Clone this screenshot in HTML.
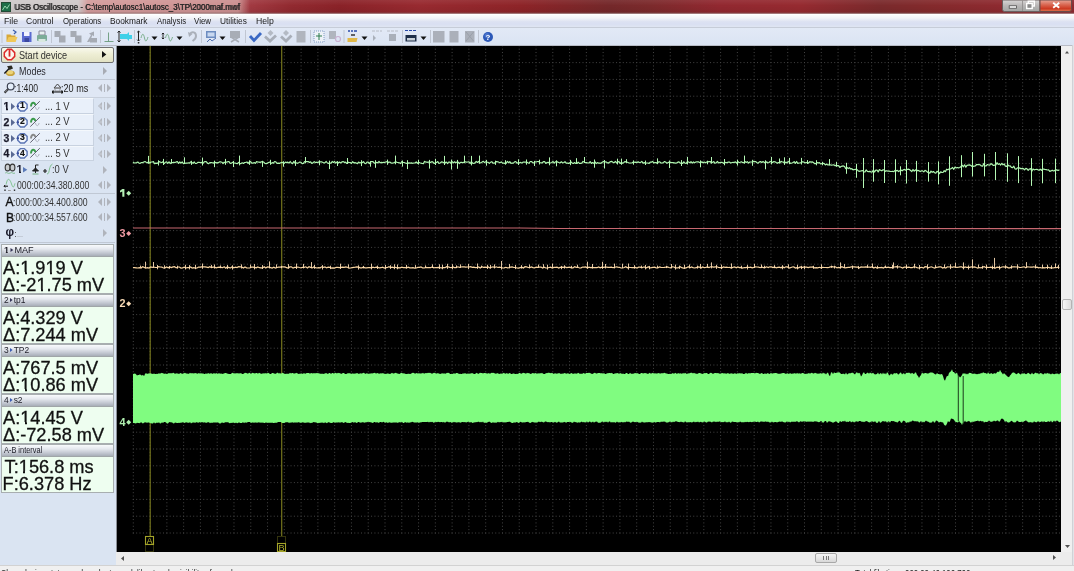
<!DOCTYPE html>
<html><head><meta charset="utf-8">
<style>
*{margin:0;padding:0;box-sizing:border-box}
html,body{width:1074px;height:571px;overflow:hidden;background:#dae4f2;font-family:"Liberation Sans",sans-serif}
body{filter:blur(0.3px)}
.a{position:absolute}
.t{position:absolute;white-space:nowrap;line-height:1}
#title{left:0;top:0;width:1074px;height:14px;background:linear-gradient(rgba(255,255,255,0.07),rgba(255,255,255,0) 40%,rgba(0,0,0,0.06) 85%,rgba(120,90,90,0.5) 93%,rgba(200,190,190,0.9)),linear-gradient(90deg,#cdc9c9 0,#d0caca 78px,#d49c9c 88px,#cc9090 238px,#a23a42 250px,#922a30 290px,#8a2228 340px,#982a30 420px,#8e2428 520px,#74282a 610px,#7c2a2c 650px,#922830 720px,#962a30 800px,#7a2a2c 880px,#842a2c 930px,#8e2a30 1000px)}
#menu{left:0;top:14px;width:1074px;height:13px;background:linear-gradient(#fbfcfc 0,#f2f4f8 25%,#dde2f2 55%,#d9dff2 75%,#dfe5f2 100%);border-top:1px solid #fff}
#tool{left:0;top:27px;width:1074px;height:18px;background:linear-gradient(#e2e9f6,#dbe4f3);border-top:1px solid #c6ccd8}
#panel{left:0;top:45px;width:116px;height:520px;background:#dae4f2}
#scope{left:116px;top:46px;width:945px;height:506px;background:#000;overflow:hidden}
#vscroll{left:1061px;top:46px;width:11px;height:506px;background:#f0f0f0}
#hscroll{left:116px;top:552px;width:945px;height:13px;background:#ececec}
#corner{left:1061px;top:552px;width:13px;height:13px;background:#ececec}
#rborder{left:1072px;top:45px;width:2px;height:520px;background:#e2e4e8;border-left:1px solid #d0d2d6}
#status{left:0;top:565px;width:1074px;height:6px;background:#f0f0f0;border-top:1px solid #d2d2d2;overflow:hidden}
.menu{font-size:9.2px;color:#1a1a1a;top:16.5px;transform-origin:0 0}
.sep{position:absolute;top:30px;width:1px;height:13px;background:#c2c8d4;border-right:1px solid #fafcff}
.row{position:absolute;left:0;width:116px}
.small{font-size:9.3px;color:#333}
.gar{position:absolute;color:#a8acb4;font-size:8px}
.chbox{position:absolute;left:1px;width:93px;height:16px;background:#e9f0fa;border:1px solid #c8d2e0;border-top-color:#f4f8fc}
.pnl{position:absolute;left:1px;width:113px;height:50px;border:1px solid #a8aeb0;background:#eefef0}
.pnl .hd{position:absolute;left:0;top:0;width:111px;height:11.5px;background:linear-gradient(#f8fafc 0,#e6e9ef 35%,#c0c5cf 75%,#a8aeb8 100%);border-bottom:1px solid #a0a6a8}
.pnl .hd>span{position:absolute;left:1.8px;top:0.2px;font-size:9.8px;color:#1e1e28;line-height:1;white-space:nowrap;transform:scaleX(0.86);transform-origin:0 0}
.pnl .l1,.pnl .l2{position:absolute;left:1px;font-size:18.2px;color:#111;line-height:1;white-space:nowrap;-webkit-text-stroke:0.3px #111}
.pnl .l1{top:13.5px}
.pnl .l2{top:30.5px}
.one{position:relative}.one::before,.one::after{content:"";position:absolute;top:0.78em;height:0.17em;background:#eefef0}.one::before{left:0.0em;width:0.238em}.one::after{left:0.352em;width:0.2em}.b2::before,.b2::after{background:#e9f0fa}.b2::before{left:-0.05em;width:0.262em;top:0.72em;height:0.32em}.b2::after{left:0.392em;width:0.22em;top:0.72em;height:0.32em}.b3::before,.b3::after{background:#dae4f2;top:0.74em;height:0.2em}.b3::before{left:0;width:0.228em}.b3::after{left:0.375em;width:0.2em}.b4::before,.b4::after{background:#f2f6fc}.b5::before,.b5::after{background:#d4d7df;top:0.74em;height:0.2em}.b5::before{left:0;width:0.228em}.b5::after{left:0.375em;width:0.2em}
</style></head><body>
<div id="title" class="a">
  <div class="a" style="left:1px;top:2px;width:10px;height:10px;background:#1e6e48;border:1px solid #244a34"></div>
  <svg class="a" style="left:2px;top:3px" width="8" height="8"><path d="M0.5 7L3 3L5 5.5L7.5 1.5" stroke="#9ad8b0" stroke-width="1" fill="none"/></svg>
  <div class="t" style="left:14.5px;top:2.5px;font-size:9px;color:#1a1a1a;transform:scaleX(0.88);transform-origin:0 0">USB Oscilloscope - C:\temp\autosc1\autosc_3\TP\2000maf.mwf</div>
  <svg class="a" style="left:1002px;top:0" width="72" height="14">
    <defs>
      <linearGradient id="wbg" x1="0" y1="0" x2="0" y2="1"><stop offset="0" stop-color="#d8d6d6"/><stop offset="0.5" stop-color="#b8b6b6"/><stop offset="1" stop-color="#a2a6a4"/></linearGradient>
      <linearGradient id="wcl" x1="0" y1="0" x2="0" y2="1"><stop offset="0" stop-color="#e6a496"/><stop offset="0.45" stop-color="#d8624c"/><stop offset="0.75" stop-color="#cc3a22"/><stop offset="1" stop-color="#e07850"/></linearGradient>
    </defs>
    <path d="M0.5 0V9.5Q0.5 11.5 2.5 11.5H38V0Z" fill="url(#wbg)" stroke="#6a6060" stroke-width="1"/>
    <path d="M38 0V11.5H67Q69.5 11.5 69.5 9.5V0Z" fill="url(#wcl)" stroke="#6a4a48" stroke-width="1"/>
    <rect x="20" y="0.5" width="0.8" height="10.5" fill="#8c8a8a"/>
    <rect x="7.2" y="5.8" width="7.2" height="2.4" fill="#fff" stroke="#4a4a4a" stroke-width="0.8"/>
    <rect x="26.3" y="1.2" width="6" height="4.8" fill="none" stroke="#fff" stroke-width="1.4"/>
    <rect x="24.7" y="3.5" width="5.5" height="5" fill="#8a8a8a" stroke="#fff" stroke-width="1.4"/>
    <path d="M51.2 2.8L57.2 7.8M57.2 2.8L51.2 7.8" stroke="#fff" stroke-width="1.9"/>
  </svg>
</div>
<div id="menu" class="a"></div>
<div id="tool" class="a"></div>
<svg class="a" style="left:0;top:27px" width="500" height="18">
<g fill="#c0c6d2">
<rect x="51" y="3" width="1" height="13"/><rect x="100" y="3" width="1" height="13"/><rect x="134" y="3" width="1" height="13"/>
<rect x="201" y="3" width="1" height="13"/><rect x="245" y="3" width="1" height="13"/><rect x="310" y="3" width="1" height="13"/>
<rect x="343.5" y="3" width="1" height="13"/><rect x="402" y="3" width="1" height="13"/><rect x="430" y="3" width="1" height="13"/><rect x="478" y="3" width="1" height="13"/>
<rect x="1.5" y="3" width="1" height="13"/>
</g>
<!-- open folder -->
<path d="M6.5 7.5h4l1 1h4v6h-9z" fill="#d8a838"/><path d="M6.5 15l2-5h9l-2 5z" fill="#f0c858"/><path d="M13 3l3 2l-2 2" stroke="#3a5ca8" stroke-width="1.2" fill="none"/>
<!-- save -->
<rect x="22" y="5" width="9.5" height="10" fill="#5a6ad0"/><rect x="24" y="5" width="5.5" height="4" fill="#f0f2ff"/><rect x="24.5" y="11" width="4.5" height="4" fill="#3a48a0"/>
<!-- print -->
<path d="M39 4h6v4h-6z" fill="#e8f0f0" stroke="#889"/><rect x="37" y="8" width="10" height="6" rx="1" fill="#7cac98"/><rect x="38.5" y="12" width="7" height="3" fill="#d8e8e0"/>
<!-- gray icons -->
<g fill="#a6abb4"><rect x="54.5" y="4" width="6" height="6"/><rect x="59" y="8.5" width="6.5" height="7"/>
<rect x="70.5" y="4" width="6" height="6"/><rect x="75" y="8.5" width="6.5" height="7"/>
<path d="M87 15l4-7l-2-1.5l5-2v5l-1.5-1.5l-3 7z"/><rect x="90" y="11" width="7" height="4.5"/></g>
<!-- green bottom icon -->
<path d="M104.5 14.5h9M108.5 14.5v-9" stroke="#6a9a7a" stroke-width="0.9" fill="none"/>
<!-- cyan icon -->
<path d="M120 7h7l2-2v3h3v4h-3v2l-2-2h-7z" fill="#40d0e8"/><path d="M119 4v11M117.6 5.6l1.4-1.6l1.4 1.6M117.6 13.4l1.4 1.6l1.4-1.6" stroke="#222" stroke-width="1" fill="none"/>
<!-- wave icons -->
<path d="M138.5 4v10M137.2 5.3l1.3-1.3l1.3 1.3M137.2 12.7l1.3 1.3l1.3-1.3" stroke="#222" stroke-width="1" fill="none"/><rect x="137.8" y="15" width="1.5" height="1.5" fill="#222"/>
<path d="M141 11c1.2-5 2.5-5 3.5 0s2.3 3 3.5-1" stroke="#70a880" stroke-width="0.9" fill="none"/>
<path d="M151.5 9.5h6l-3 3.5z" fill="#111"/>
<path d="M163 6v6M161.8 7.2l1.2-1.2l1.2 1.2M161.8 10.8l1.2 1.2l1.2-1.2" stroke="#222" stroke-width="1" fill="none"/>
<path d="M165.5 11c1.2-5 2.5-5 3.5 0s2.3 3 3.5-1" stroke="#70a880" stroke-width="0.9" fill="none"/>
<path d="M176.5 9.5h6l-3 3.5z" fill="#111"/>
<path d="M190 7c2-3 6-2 6 2c0 3-2 4-3.5 5" stroke="#aab0ba" stroke-width="2" fill="none"/><path d="M188 5l1 5l3.5-3z" fill="#aab0ba"/>
<!-- monitor -->
<rect x="206" y="4" width="10" height="7" fill="#6c8cc0"/><rect x="207.5" y="5.5" width="7" height="4" fill="#c8d8f0"/><path d="M207 15l3-3l2 2l4-3" stroke="#5070b0" stroke-width="1" fill="none"/>
<path d="M219.5 9.5h6l-3 3.5z" fill="#111"/>
<rect x="230" y="4" width="10" height="7" fill="#a8adb6"/><path d="M231 15l8-5M231 10l8 5" stroke="#a8adb6" stroke-width="1.5"/>
<!-- checks -->
<path d="M250 9l4 4.5l7-7.5" stroke="#3a68c4" stroke-width="2.8" fill="none"/>
<path d="M265 9.5l5 4.5l6-5.5" stroke="#a8aeb8" stroke-width="2.8" fill="none"/><path d="M270.5 3l3 3l-3 3l-3-3z" fill="#b4bac4"/>
<path d="M281 9.5l5 4.5l5.5-5.5" stroke="#a8aeb8" stroke-width="2.8" fill="none"/><path d="M286 3l3 3l-3 3l-3-3z" fill="#b4bac4"/>
<rect x="296.5" y="4" width="9" height="11.5" fill="#b0b5be"/>
<!-- grid icon -->
<rect x="314" y="4" width="10" height="11" fill="#eef2f8" stroke="#6a8ab8" stroke-width="0.8" stroke-dasharray="1 1"/><path d="M316 9h6M319 6v7" stroke="#2a7a4a" stroke-width="1"/>
<rect x="329" y="4" width="7" height="8" fill="#b0b5be"/><circle cx="338" cy="12" r="2.5" fill="none" stroke="#c8b0d0" stroke-width="1.2"/>
<!-- folder abc -->
<path d="M347.5 11h10l-1 4h-9z" fill="#e0b848"/><path d="M348 4h2M351 4h2M354 4h3" stroke="#2a4aa8" stroke-width="1.4"/><path d="M351 8h4" stroke="#333" stroke-width="1.5"/>
<path d="M361.5 9.5h6l-3 3.5z" fill="#111"/>
<path d="M372 4h3M376 4h3M380 4h2" stroke="#b8bcc6" stroke-width="1"/><path d="M373 8l3 3l-3 3z" fill="#aab0ba"/>
<path d="M387 4h3M391 4h3M395 4h3" stroke="#b8bcc6" stroke-width="1"/><rect x="389" y="7" width="7" height="7" fill="#aab0ba"/>
<!-- abc display -->
<path d="M405 3.5h3M409 3.5h3M413 3.5h3" stroke="#2a4aa8" stroke-width="1.2"/><rect x="405.5" y="8" width="11" height="6.5" fill="#1e2e48"/><rect x="407" y="11" width="8" height="2.5" fill="#c8d0d8"/>
<path d="M420.5 9.5h6l-3 3.5z" fill="#111"/>
<g fill="#abb0ba"><rect x="433" y="4" width="11.5" height="11.5"/><rect x="449.5" y="4" width="9" height="11.5"/><rect x="465" y="4" width="9.5" height="11.5"/></g>
<path d="M466 14l7.5-9M466 5l7.5 9" stroke="#9aa0aa" stroke-width="1"/>
<!-- help -->
<circle cx="488" cy="10" r="5" fill="#2c58b8"/><circle cx="487" cy="8.5" r="2.5" fill="#6a90e0" opacity="0.5"/><text x="485.5" y="13" font-family="Liberation Sans" font-weight="bold" font-size="8" fill="#fff">?</text>
</svg>

<div id="panel" class="a"></div>
<!-- start device -->
<div class="a" style="left:1px;top:47.3px;width:113px;height:15.4px;border:1px solid #707070;border-radius:2px;background:linear-gradient(#f8f8ec,#eeeed4 45%,#e2e2c4)"></div>
<div class="a" style="left:0;top:45px;width:1074px;height:1px;background:#b8bcc6"></div>
<svg class="a" style="left:3px;top:48px" width="14" height="14"><path d="M4.6 1.3h3.8l3.3 3.3v3.8l-3.3 3.3H4.6L1.3 8.4V4.6z" fill="#fbf6ee" stroke="#dc2a2a" stroke-width="1.5"/><rect x="5.6" y="1.6" width="1.8" height="7" fill="#dc2a2a"/></svg>
<svg class="a" style="left:102.4px;top:51.2px" width="5" height="7"><path d="M0 0L4.3 3.4L0 6.8z" fill="#111"/></svg>
<!-- modes -->
<svg class="a" style="left:0;top:62px" width="17" height="16"><ellipse cx="10.4" cy="11.2" rx="4.4" ry="2.8" fill="#c8a440"/><ellipse cx="10" cy="10.4" rx="3.2" ry="1.8" fill="#ecd478"/><path d="M4.4 11.6L9.6 6" stroke="#1a1a1a" stroke-width="1.4"/><path d="M7 4.2l4.6-0.6l1.4 2.8l-3.4 1.6z" fill="#2a2a22"/></svg>
<svg class="a" style="left:103px;top:67px" width="4" height="8"><path d="M0 0L4 4L0 8z" fill="#a8acb4"/></svg>
<div class="a" style="left:0;top:79px;width:115px;height:1px;background:#c0c8d4"></div>
<div class="a" style="left:0;top:80px;width:115px;height:17px;background:#dfe7f4"></div>
<!-- zoom row -->
<svg class="a" style="left:0;top:79px" width="17" height="17"><circle cx="10.7" cy="7.4" r="3.4" fill="#e4eefa" stroke="#3a4050" stroke-width="1.2"/><path d="M8 10.2L4.6 13.8" stroke="#2a2a2a" stroke-width="2"/><path d="M7.6 10.6L5 13.4" stroke="#d0d4dc" stroke-width="0.6"/></svg>
<svg class="a" style="left:52px;top:82px" width="11" height="12"><path d="M2 6l3.5-4l3.5 4z" fill="none" stroke="#444" stroke-width="1"/><rect x="3" y="6" width="5" height="3" fill="none" stroke="#888" stroke-width="0.8"/><path d="M0 10h11M1.5 8.5L0 10l1.5 1.5M9.5 8.5L11 10l-1.5 1.5" stroke="#111" stroke-width="1.1" fill="none"/></svg>
<svg class="a" style="left:98px;top:84px" width="13" height="8"><path d="M4 0L0 4L4 8z" fill="#b0b4bc"/><rect x="6" y="0" width="1" height="8" fill="#b0b4bc"/><path d="M9 0L13 4L9 8z" fill="#b0b4bc"/></svg>
<div class="a" style="left:0;top:97px;width:115px;height:1px;background:#c8d0dc"></div>
<div class="chbox" style="top:98px;height:16px"></div>
<div class="t" style="left:3.4px;top:100.9px;font-size:10.5px;font-weight:bold;color:#1a1a2a;-webkit-text-stroke:0.25px #1a1a2a"><span class="one b2">1</span></div>
<svg class="a" style="left:10.5px;top:103px" width="4" height="7"><path d="M0 0L4 3.5L0 7z" fill="#5a6a94"/></svg>
<svg class="a" style="left:16px;top:99.5px" width="13" height="13"><path d="M4.5 1.6h3.8l2.8 2.8v3.8l-2.8 2.8H4.5L1.7 8.2V4.4z" fill="#f2f6fc" stroke="#5a74b4" stroke-width="1.4"/><circle cx="1.8" cy="6.3" r="1.2" fill="#3a50a0"/></svg>
<div class="t" style="left:19.9px;top:101.3px;font-size:8.6px;font-weight:bold;color:#111;-webkit-text-stroke:0.2px #111">1</div>
<svg class="a" style="left:29px;top:99.5px" width="12" height="12"><path d="M1.3 10.6L10.8 1.2" stroke="#505060" stroke-width="0.9"/><path d="M2 6.5C2.2 1.8 5.8 1.8 6.3 5" stroke="#3a9a4a" stroke-width="1.9" fill="none"/><path d="M6.5 7c0.5 3.5 3 3.5 3.6 0" stroke="#a0a4b0" stroke-width="0.8" fill="none"/></svg>
<svg class="a" style="left:98px;top:102px" width="13" height="8"><path d="M4 0L0 4L4 8z" fill="#b0b4bc"/><path d="M1 3.2h3M1 4.8h3" stroke="#d8dde6" stroke-width="0.6"/><rect x="6" y="0" width="1" height="8" fill="#b0b4bc"/><path d="M9 0L13 4L9 8z" fill="#b0b4bc"/></svg>
<div class="chbox" style="top:114px;height:16px"></div>
<div class="t" style="left:3.4px;top:116.9px;font-size:10.5px;font-weight:bold;color:#1a1a2a;-webkit-text-stroke:0.25px #1a1a2a">2</div>
<svg class="a" style="left:10.5px;top:119px" width="4" height="7"><path d="M0 0L4 3.5L0 7z" fill="#5a6a94"/></svg>
<svg class="a" style="left:16px;top:115.5px" width="13" height="13"><path d="M4.5 1.6h3.8l2.8 2.8v3.8l-2.8 2.8H4.5L1.7 8.2V4.4z" fill="#f2f6fc" stroke="#5a74b4" stroke-width="1.4"/><circle cx="1.8" cy="6.3" r="1.2" fill="#3a50a0"/></svg>
<div class="t" style="left:19.9px;top:117.3px;font-size:8.6px;font-weight:bold;color:#111;-webkit-text-stroke:0.2px #111">2</div>
<svg class="a" style="left:29px;top:115.5px" width="12" height="12"><path d="M1.3 10.6L10.8 1.2" stroke="#505060" stroke-width="0.9"/><path d="M2 6.5C2.2 1.8 5.8 1.8 6.3 5" stroke="#3a9a4a" stroke-width="1.9" fill="none"/><path d="M6.5 7c0.5 3.5 3 3.5 3.6 0" stroke="#a0a4b0" stroke-width="0.8" fill="none"/></svg>
<svg class="a" style="left:98px;top:118px" width="13" height="8"><path d="M4 0L0 4L4 8z" fill="#b0b4bc"/><path d="M1 3.2h3M1 4.8h3" stroke="#d8dde6" stroke-width="0.6"/><rect x="6" y="0" width="1" height="8" fill="#b0b4bc"/><path d="M9 0L13 4L9 8z" fill="#b0b4bc"/></svg>
<div class="chbox" style="top:130px;height:16px"></div>
<div class="t" style="left:3.4px;top:132.9px;font-size:10.5px;font-weight:bold;color:#1a1a2a;-webkit-text-stroke:0.25px #1a1a2a">3</div>
<svg class="a" style="left:10.5px;top:135px" width="4" height="7"><path d="M0 0L4 3.5L0 7z" fill="#5a6a94"/></svg>
<svg class="a" style="left:16px;top:131.5px" width="13" height="13"><path d="M4.5 1.6h3.8l2.8 2.8v3.8l-2.8 2.8H4.5L1.7 8.2V4.4z" fill="#f2f6fc" stroke="#5a74b4" stroke-width="1.4"/><circle cx="1.8" cy="6.3" r="1.2" fill="#3a50a0"/></svg>
<div class="t" style="left:19.9px;top:133.3px;font-size:8.6px;font-weight:bold;color:#111;-webkit-text-stroke:0.2px #111">3</div>
<svg class="a" style="left:29px;top:131.5px" width="12" height="12"><path d="M1.3 10.6L10.8 1.2" stroke="#505060" stroke-width="0.9"/><path d="M2 6.5C2.2 1.8 5.8 1.8 6.3 5" stroke="#888" stroke-width="1.9" fill="none"/><path d="M6.5 7c0.5 3.5 3 3.5 3.6 0" stroke="#a0a4b0" stroke-width="0.8" fill="none"/></svg>
<svg class="a" style="left:98px;top:134px" width="13" height="8"><path d="M4 0L0 4L4 8z" fill="#b0b4bc"/><path d="M1 3.2h3M1 4.8h3" stroke="#d8dde6" stroke-width="0.6"/><rect x="6" y="0" width="1" height="8" fill="#b0b4bc"/><path d="M9 0L13 4L9 8z" fill="#b0b4bc"/></svg>
<div class="chbox" style="top:145.5px;height:15.5px"></div>
<div class="t" style="left:3.4px;top:148.4px;font-size:10.5px;font-weight:bold;color:#1a1a2a;-webkit-text-stroke:0.25px #1a1a2a">4</div>
<svg class="a" style="left:10.5px;top:150.5px" width="4" height="7"><path d="M0 0L4 3.5L0 7z" fill="#5a6a94"/></svg>
<svg class="a" style="left:16px;top:147.0px" width="13" height="13"><path d="M4.5 1.6h3.8l2.8 2.8v3.8l-2.8 2.8H4.5L1.7 8.2V4.4z" fill="#f2f6fc" stroke="#5a74b4" stroke-width="1.4"/><circle cx="1.8" cy="6.3" r="1.2" fill="#3a50a0"/></svg>
<div class="t" style="left:19.9px;top:148.8px;font-size:8.6px;font-weight:bold;color:#111;-webkit-text-stroke:0.2px #111">4</div>
<svg class="a" style="left:29px;top:147.0px" width="12" height="12"><path d="M1.3 10.6L10.8 1.2" stroke="#505060" stroke-width="0.9"/><path d="M2 6.5C2.2 1.8 5.8 1.8 6.3 5" stroke="#3a9a4a" stroke-width="1.9" fill="none"/><path d="M6.5 7c0.5 3.5 3 3.5 3.6 0" stroke="#a0a4b0" stroke-width="0.8" fill="none"/></svg>
<svg class="a" style="left:98px;top:149.5px" width="13" height="8"><path d="M4 0L0 4L4 8z" fill="#b0b4bc"/><path d="M1 3.2h3M1 4.8h3" stroke="#d8dde6" stroke-width="0.6"/><rect x="6" y="0" width="1" height="8" fill="#b0b4bc"/><path d="M9 0L13 4L9 8z" fill="#b0b4bc"/></svg>
<!-- trigger rows -->
<svg class="a" style="left:0;top:160px" width="17" height="17"><ellipse cx="7.6" cy="7.5" rx="2.4" ry="3.4" fill="#c8ccd0" stroke="#333" stroke-width="1.1"/><ellipse cx="12.5" cy="7.5" rx="2.4" ry="3.4" fill="#c8ccd0" stroke="#333" stroke-width="1.1"/><path d="M5.2 13c1.5-1.5 3 1.5 4.9 0s3.2 1.5 4.9 0" stroke="#78b888" stroke-width="0.9" fill="none"/></svg>
<div class="t" style="left:16.6px;top:164.3px;font-size:11px;font-weight:bold;color:#1a1a2a"><span class="one b3">1</span></div>
<svg class="a" style="left:23px;top:166.6px" width="5" height="6"><path d="M0 0L4.3 2.7L0 5.4z" fill="#5a7ab8"/></svg>
<svg class="a" style="left:32px;top:164px" width="8" height="11"><path d="M3.5 1h3M3.5 1v8M0.5 7h6l-3-3z" stroke="#222" stroke-width="1" fill="#222"/><path d="M0.5 10h6" stroke="#70b080"/></svg>
<svg class="a" style="left:43px;top:163px" width="11" height="12"><path d="M0 8h4M2 6v4" stroke="#222" stroke-width="1.2"/><path d="M4 11c2 0 2-3 2.5-5s1-4 3-5" stroke="#80c090" stroke-width="1" fill="none"/></svg>
<svg class="a" style="left:103px;top:166px" width="4" height="8"><path d="M0 0L4 4L0 8z" fill="#b0b4bc"/></svg>
<svg class="a" style="left:0;top:176px" width="17" height="16"><path d="M6.1 8.5C7.5 2 8.5 3 9.8 4.2S12 11 13.2 11S14.6 8 15 7.3" stroke="#78c088" stroke-width="0.9" fill="none"/><path d="M4 10.2h4M5.2 9l-1.2 1.2l1.2 1.2" stroke="#111" stroke-width="1" fill="none"/><rect x="4.3" y="13.5" width="1.4" height="1.4" fill="#222"/><rect x="8" y="14" width="2.8" height="0.8" fill="#888"/><rect x="13.8" y="13.5" width="1.4" height="1.4" fill="#222"/></svg>
<svg class="a" style="left:98px;top:181px" width="13" height="8"><path d="M4 0L0 4L4 8z" fill="#b0b4bc"/><rect x="6" y="0" width="1" height="8" fill="#b0b4bc"/><path d="M9 0L13 4L9 8z" fill="#b0b4bc"/></svg>
<div class="a" style="left:0;top:193px;width:115px;height:1px;background:#c0c8d4"></div>
<div class="t" style="left:5.4px;top:196.4px;font-size:12px;color:#111;-webkit-text-stroke:0.35px #111">A</div>
<svg class="a" style="left:98px;top:198px" width="13" height="8"><path d="M4 0L0 4L4 8z" fill="#b0b4bc"/><rect x="6" y="0" width="1" height="8" fill="#b0b4bc"/><path d="M9 0L13 4L9 8z" fill="#b0b4bc"/></svg>
<div class="t" style="left:6px;top:211.6px;font-size:12px;color:#111;-webkit-text-stroke:0.35px #111">B</div>
<svg class="a" style="left:98px;top:213px" width="13" height="8"><path d="M4 0L0 4L4 8z" fill="#b0b4bc"/><rect x="6" y="0" width="1" height="8" fill="#b0b4bc"/><path d="M9 0L13 4L9 8z" fill="#b0b4bc"/></svg>
<div class="t" style="left:5.5px;top:226px;font-size:12px;color:#1a1a2a;font-weight:bold">φ</div>
<div class="t" style="left:14.3px;top:229.5px;font-size:9px;color:#444">:</div><div class="t" style="left:16.6px;top:229.5px;font-size:9px;color:#a0a4aa;transform:scaleX(0.8);transform-origin:0 0">...</div>
<svg class="a" style="left:103px;top:229px" width="4" height="8"><path d="M0 0L4 4L0 8z" fill="#b0b4bc"/></svg>
<div class="a" style="left:0;top:242px;width:115px;height:1px;background:#c0c8d4"></div>
<!-- panels -->
<div class="pnl" style="top:244px"><div class="hd"><span style="transform:scaleX(0.93)"><span class="one b5" style="font-weight:bold">1</span><i style="display:inline-block;width:0;height:0;border-left:3.8px solid #335;border-top:2.6px solid transparent;border-bottom:2.6px solid transparent;margin:0 1.4px 1.2px 1.4px"></i>MAF</span></div><div class="l1">A:<span class="one">1</span>.9<span class="one">1</span>9 V</div><div class="l2">Δ:-2<span class="one">1</span>.75 mV</div></div>
<div class="pnl" style="top:294px"><div class="hd"><span>2<i style="display:inline-block;width:0;height:0;border-left:3.8px solid #335;border-top:2.6px solid transparent;border-bottom:2.6px solid transparent;margin:0 1.4px 1.2px 1.4px"></i>tp1</span></div><div class="l1">A:4.329 V</div><div class="l2">Δ:7.244 mV</div></div>
<div class="pnl" style="top:344px"><div class="hd"><span>3<i style="display:inline-block;width:0;height:0;border-left:3.8px solid #3a5ab0;border-top:2.6px solid transparent;border-bottom:2.6px solid transparent;margin:0 1.4px 1.2px 1.4px"></i>TP2</span></div><div class="l1">A:767.5 mV</div><div class="l2">Δ:<span class="one">1</span>0.86 mV</div></div>
<div class="pnl" style="top:394px"><div class="hd"><span>4<i style="display:inline-block;width:0;height:0;border-left:3.8px solid #3a5ab0;border-top:2.6px solid transparent;border-bottom:2.6px solid transparent;margin:0 1.4px 1.2px 1.4px"></i>s2</span></div><div class="l1">A:<span class="one">1</span>4.45 V</div><div class="l2">Δ:-72.58 mV</div></div>
<div class="pnl" style="top:444px;height:49px"><div class="hd"><span style="font-size:8.6px;top:1px;left:1.5px">A-B interval</span></div><div class="l1" style="left:2.6px;top:12.8px">T:<span class="one">1</span>56.8 ms</div><div class="l2" style="left:0.6px;top:29.8px">F:6.378 Hz</div></div>

<div id="scope" class="a"><svg width="945" height="506" viewBox="0 0 945 506" style="position:absolute;left:0;top:0">
<rect x="0" y="0" width="1" height="506" fill="#8a8e96"/>
<path d="M17.30 0V487.60M34.08 0V487.60M50.86 0V487.60M67.64 0V487.60M84.42 0V487.60M101.20 0V487.60M117.98 0V487.60M134.76 0V487.60M151.54 0V487.60M168.32 0V487.60M185.10 0V487.60M201.88 0V487.60M218.66 0V487.60M235.44 0V487.60M252.22 0V487.60M269.00 0V487.60M285.78 0V487.60M302.56 0V487.60M319.34 0V487.60M336.12 0V487.60M352.90 0V487.60M369.68 0V487.60M386.46 0V487.60M403.24 0V487.60M420.02 0V487.60M436.80 0V487.60M453.58 0V487.60M470.36 0V487.60M487.14 0V487.60M503.92 0V487.60M520.70 0V487.60M537.48 0V487.60M554.26 0V487.60M571.04 0V487.60M587.82 0V487.60M604.60 0V487.60M621.38 0V487.60M638.16 0V487.60M654.94 0V487.60M671.72 0V487.60M688.50 0V487.60M705.28 0V487.60M722.06 0V487.60M738.84 0V487.60M755.62 0V487.60M772.40 0V487.60M789.18 0V487.60M805.96 0V487.60M822.74 0V487.60M839.52 0V487.60M856.30 0V487.60M873.08 0V487.60M889.86 0V487.60M906.64 0V487.60M923.42 0V487.60M940.20 0V487.60" stroke="#444" stroke-width="1" stroke-dasharray="1 2.360" stroke-dashoffset="-2.660"/><path d="M16.80 16.60H945M16.80 33.40H945M16.80 50.20H945M16.80 67.00H945M16.80 83.80H945M16.80 100.60H945M16.80 117.40H945M16.80 134.20H945M16.80 151.00H945M16.80 167.80H945M16.80 184.60H945M16.80 201.40H945M16.80 218.20H945M16.80 235.00H945M16.80 251.80H945M16.80 268.60H945M16.80 285.40H945M16.80 302.20H945M16.80 319.00H945M16.80 335.80H945M16.80 352.60H945M16.80 369.40H945M16.80 386.20H945M16.80 403.00H945M16.80 419.80H945M16.80 436.60H945M16.80 453.40H945M16.80 470.20H945M16.80 487.00H945" stroke="#444" stroke-width="1" stroke-dasharray="1 2.356"/>
<path d="M34.19999999999999 0V490M165.7 0V490" stroke="#74741c" stroke-width="1.2"/><rect x="29.5" y="498.5" width="8" height="7" fill="none" stroke="#34340e" stroke-width="1"/><rect x="29.5" y="490.5" width="8" height="8" fill="#000" stroke="#a4a428" stroke-width="1.1"/><text x="30.400000000000006" y="497.70000000000005" fill="#b4b430" font-family="Liberation Sans" font-size="9.2">A</text><rect x="161.5" y="490.5" width="8" height="7" fill="none" stroke="#34340e" stroke-width="1"/><rect x="161.5" y="497.5" width="8" height="8" fill="#000" stroke="#a4a428" stroke-width="1.1"/><text x="162.60000000000002" y="504.79999999999995" fill="#b4b430" font-family="Liberation Sans" font-size="9.2">B</text>
<path d="M17 182.0 L404 182.0 L444 182.5 L945 182.6" stroke="#c86870" stroke-width="1.1" fill="none"/>
<path d="M17.0 221.6 L18.6 221.7 L20.2 221.8 L21.8 222.0 L23.4 221.7 L25.0 222.0 L26.6 220.7 L28.2 221.4 L29.8 222.0 L31.4 221.6 L33.0 222.0 L34.6 220.9 L36.2 221.4 L37.8 221.0 L39.4 221.5 L41.0 221.5 L42.6 220.7 L44.2 221.0 L45.8 221.1 L47.4 222.0 L49.0 221.8 L50.6 220.9 L52.2 221.8 L53.8 220.9 L55.4 221.6 L57.0 220.9 L58.6 220.7 L60.2 221.9 L61.8 221.0 L63.4 221.0 L65.0 222.1 L66.6 221.9 L68.2 221.1 L69.8 222.0 L71.4 221.5 L73.0 221.6 L74.6 221.0 L76.2 222.0 L77.8 221.7 L79.4 222.1 L81.0 222.0 L82.6 221.1 L84.2 221.2 L85.8 220.9 L87.4 220.9 L89.0 220.8 L90.6 221.1 L92.2 221.5 L93.8 220.7 L95.4 221.6 L97.0 221.2 L98.6 221.1 L100.2 221.8 L101.8 221.4 L103.4 221.1 L105.0 221.4 L106.6 221.7 L108.2 220.8 L109.8 222.1 L111.4 220.7 L113.0 221.7 L114.6 221.9 L116.2 220.7 L117.8 221.8 L119.4 221.2 L121.0 221.5 L122.6 220.7 L124.2 220.8 L125.8 221.0 L127.4 222.0 L129.0 221.0 L130.6 221.8 L132.2 222.0 L133.8 222.0 L135.4 221.2 L137.0 221.2 L138.6 221.4 L140.2 221.8 L141.8 220.9 L143.4 221.7 L145.0 221.8 L146.6 221.9 L148.2 220.8 L149.8 222.0 L151.4 220.8 L153.0 221.2 L154.6 221.6 L156.2 222.0 L157.8 221.2 L159.4 222.0 L161.0 221.5 L162.6 221.1 L164.2 221.1 L165.8 220.9 L167.4 220.8 L169.0 220.9 L170.6 221.7 L172.2 222.1 L173.8 220.9 L175.4 220.8 L177.0 222.1 L178.6 221.4 L180.2 221.3 L181.8 221.0 L183.4 221.5 L185.0 221.9 L186.6 221.3 L188.2 221.3 L189.8 220.8 L191.4 222.0 L193.0 220.7 L194.6 221.4 L196.2 221.9 L197.8 220.9 L199.4 221.7 L201.0 222.0 L202.6 221.6 L204.2 221.8 L205.8 220.8 L207.4 221.3 L209.0 220.9 L210.6 221.9 L212.2 221.1 L213.8 221.3 L215.4 222.1 L217.0 221.9 L218.6 222.1 L220.2 221.3 L221.8 221.4 L223.4 221.7 L225.0 221.4 L226.6 221.1 L228.2 221.3 L229.8 220.9 L231.4 221.2 L233.0 222.1 L234.6 222.0 L236.2 221.6 L237.8 221.4 L239.4 221.2 L241.0 220.8 L242.6 221.1 L244.2 221.8 L245.8 221.9 L247.4 221.2 L249.0 221.8 L250.6 221.8 L252.2 221.7 L253.8 221.6 L255.4 221.8 L257.0 221.2 L258.6 221.7 L260.2 221.1 L261.8 221.4 L263.4 221.8 L265.0 221.7 L266.6 221.1 L268.2 222.0 L269.8 221.6 L271.4 221.5 L273.0 220.7 L274.6 221.5 L276.2 221.1 L277.8 221.6 L279.4 221.3 L281.0 221.8 L282.6 221.6 L284.2 221.8 L285.8 221.2 L287.4 221.6 L289.0 221.7 L290.6 221.9 L292.2 221.2 L293.8 221.9 L295.4 221.9 L297.0 221.7 L298.6 222.1 L300.2 222.0 L301.8 221.4 L303.4 221.4 L305.0 220.9 L306.6 221.9 L308.2 222.0 L309.8 221.4 L311.4 221.7 L313.0 221.7 L314.6 221.7 L316.2 220.9 L317.8 221.8 L319.4 221.5 L321.0 221.6 L322.6 221.3 L324.2 221.6 L325.8 221.8 L327.4 221.6 L329.0 221.7 L330.6 220.7 L332.2 220.9 L333.8 221.3 L335.4 221.6 L337.0 221.0 L338.6 221.7 L340.2 221.6 L341.8 220.8 L343.4 221.4 L345.0 221.0 L346.6 220.8 L348.2 220.9 L349.8 221.1 L351.4 221.0 L353.0 221.0 L354.6 220.7 L356.2 221.4 L357.8 221.2 L359.4 221.6 L361.0 221.5 L362.6 221.0 L364.2 222.0 L365.8 220.7 L367.4 221.3 L369.0 221.1 L370.6 221.3 L372.2 220.9 L373.8 221.9 L375.4 221.2 L377.0 220.8 L378.6 221.6 L380.2 220.8 L381.8 221.5 L383.4 221.2 L385.0 221.5 L386.6 222.0 L388.2 221.8 L389.8 221.3 L391.4 221.8 L393.0 221.6 L394.6 221.2 L396.2 220.9 L397.8 221.5 L399.4 221.5 L401.0 222.0 L402.6 222.1 L404.2 221.6 L405.8 221.2 L407.4 222.0 L409.0 220.7 L410.6 220.9 L412.2 221.5 L413.8 221.6 L415.4 220.9 L417.0 221.6 L418.6 221.9 L420.2 221.2 L421.8 221.3 L423.4 221.0 L425.0 221.1 L426.6 222.1 L428.2 221.2 L429.8 222.0 L431.4 222.0 L433.0 221.5 L434.6 221.1 L436.2 222.1 L437.8 221.4 L439.4 221.3 L441.0 221.1 L442.6 222.1 L444.2 221.4 L445.8 221.1 L447.4 221.4 L449.0 220.9 L450.6 221.6 L452.2 221.3 L453.8 221.1 L455.4 221.8 L457.0 221.9 L458.6 220.7 L460.2 221.4 L461.8 221.1 L463.4 222.0 L465.0 221.8 L466.6 221.0 L468.2 221.1 L469.8 220.9 L471.4 222.1 L473.0 221.1 L474.6 221.6 L476.2 221.4 L477.8 221.6 L479.4 221.5 L481.0 221.7 L482.6 220.9 L484.2 221.8 L485.8 221.1 L487.4 221.4 L489.0 221.2 L490.6 221.1 L492.2 221.4 L493.8 221.4 L495.4 221.2 L497.0 221.7 L498.6 221.5 L500.2 220.8 L501.8 221.1 L503.4 221.3 L505.0 222.0 L506.6 221.9 L508.2 221.5 L509.8 220.7 L511.4 221.8 L513.0 221.3 L514.6 221.5 L516.2 221.7 L517.8 221.6 L519.4 221.4 L521.0 222.0 L522.6 221.2 L524.2 221.2 L525.8 221.9 L527.4 221.0 L529.0 221.1 L530.6 221.9 L532.2 220.8 L533.8 221.9 L535.4 221.7 L537.0 221.3 L538.6 221.1 L540.2 221.8 L541.8 222.0 L543.4 220.9 L545.0 221.4 L546.6 221.5 L548.2 221.4 L549.8 221.2 L551.4 220.9 L553.0 221.5 L554.6 221.8 L556.2 220.8 L557.8 221.0 L559.4 221.8 L561.0 221.8 L562.6 221.6 L564.2 220.7 L565.8 221.7 L567.4 222.1 L569.0 222.1 L570.6 221.7 L572.2 220.8 L573.8 221.9 L575.4 221.0 L577.0 221.6 L578.6 222.0 L580.2 221.7 L581.8 220.9 L583.4 221.1 L585.0 222.0 L586.6 220.9 L588.2 221.6 L589.8 221.3 L591.4 220.9 L593.0 221.6 L594.6 220.8 L596.2 220.9 L597.8 221.2 L599.4 220.8 L601.0 220.8 L602.6 221.5 L604.2 221.7 L605.8 221.9 L607.4 220.9 L609.0 221.3 L610.6 221.1 L612.2 221.5 L613.8 221.4 L615.4 222.0 L617.0 221.2 L618.6 220.8 L620.2 221.7 L621.8 220.9 L623.4 221.6 L625.0 221.4 L626.6 222.0 L628.2 221.5 L629.8 221.6 L631.4 221.1 L633.0 221.5 L634.6 221.1 L636.2 221.8 L637.8 221.4 L639.4 220.9 L641.0 221.0 L642.6 221.2 L644.2 221.7 L645.8 221.0 L647.4 221.7 L649.0 221.6 L650.6 220.8 L652.2 221.6 L653.8 220.8 L655.4 220.9 L657.0 221.5 L658.6 221.0 L660.2 221.9 L661.8 221.4 L663.4 221.2 L665.0 221.8 L666.6 220.7 L668.2 221.7 L669.8 220.8 L671.4 220.9 L673.0 222.0 L674.6 221.7 L676.2 221.0 L677.8 220.9 L679.4 222.1 L681.0 221.6 L682.6 221.8 L684.2 220.9 L685.8 221.6 L687.4 221.2 L689.0 221.0 L690.6 221.2 L692.2 221.6 L693.8 221.2 L695.4 221.2 L697.0 220.9 L698.6 221.9 L700.2 221.6 L701.8 221.8 L703.4 221.3 L705.0 221.9 L706.6 221.4 L708.2 221.5 L709.8 221.5 L711.4 221.7 L713.0 221.3 L714.6 220.8 L716.2 220.7 L717.8 221.0 L719.4 220.8 L721.0 221.9 L722.6 221.4 L724.2 221.8 L725.8 220.7 L727.4 221.4 L729.0 221.9 L730.6 221.6 L732.2 221.3 L733.8 221.4 L735.4 220.8 L737.0 220.9 L738.6 220.9 L740.2 221.2 L741.8 221.2 L743.4 221.9 L745.0 220.9 L746.6 221.1 L748.2 221.1 L749.8 220.9 L751.4 221.1 L753.0 221.0 L754.6 221.4 L756.2 220.7 L757.8 222.0 L759.4 221.2 L761.0 222.0 L762.6 221.7 L764.2 221.6 L765.8 221.4 L767.4 222.0 L769.0 220.9 L770.6 221.6 L772.2 221.1 L773.8 221.6 L775.4 221.7 L777.0 220.9 L778.6 221.0 L780.2 220.7 L781.8 221.0 L783.4 220.8 L785.0 221.3 L786.6 222.1 L788.2 221.2 L789.8 221.1 L791.4 221.4 L793.0 221.1 L794.6 221.7 L796.2 221.7 L797.8 220.9 L799.4 221.0 L801.0 221.6 L802.6 222.0 L804.2 221.6 L805.8 221.3 L807.4 222.1 L809.0 220.7 L810.6 220.8 L812.2 221.8 L813.8 221.3 L815.4 220.8 L817.0 221.5 L818.6 222.1 L820.2 221.4 L821.8 221.2 L823.4 220.8 L825.0 220.8 L826.6 222.0 L828.2 221.4 L829.8 222.0 L831.4 220.8 L833.0 221.0 L834.6 220.8 L836.2 221.3 L837.8 220.8 L839.4 221.1 L841.0 221.3 L842.6 221.1 L844.2 220.8 L845.8 220.8 L847.4 222.1 L849.0 221.0 L850.6 221.4 L852.2 221.3 L853.8 221.4 L855.4 220.8 L857.0 221.1 L858.6 220.9 L860.2 221.5 L861.8 222.0 L863.4 221.5 L865.0 221.9 L866.6 221.0 L868.2 220.7 L869.8 221.5 L871.4 221.4 L873.0 221.5 L874.6 221.2 L876.2 221.6 L877.8 221.7 L879.4 222.0 L881.0 221.1 L882.6 221.3 L884.2 221.9 L885.8 221.0 L887.4 220.9 L889.0 221.1 L890.6 220.8 L892.2 221.8 L893.8 221.8 L895.4 221.1 L897.0 220.9 L898.6 220.8 L900.2 221.0 L901.8 220.8 L903.4 221.3 L905.0 221.5 L906.6 221.0 L908.2 220.8 L909.8 221.7 L911.4 220.8 L913.0 221.0 L914.6 221.1 L916.2 221.2 L917.8 220.8 L919.4 221.3 L921.0 221.1 L922.6 221.8 L924.2 221.5 L925.8 222.0 L927.4 221.6 L929.0 221.8 L930.6 221.5 L932.2 221.3 L933.8 221.8 L935.4 221.6 L937.0 222.0 L938.6 221.7 L940.2 221.7 L941.8 221.1 L943.4 221.8" fill="none" stroke="#f8d4a0" stroke-width="1.2"/><path d="M24.5 219.6V221.8M29.5 215.7V222.2M37.5 216.0V221.8M41.5 219.0V223.3M48.5 219.3V222.5M53.5 219.9V222.8M61.5 219.7V222.7M69.5 218.8V223.5M73.5 219.1V223.4M79.5 218.8V223.2M86.5 217.5V222.8M95.5 218.9V221.8M98.5 218.5V222.6M104.5 219.4V222.2M111.5 219.0V223.1M116.5 219.3V223.6M125.5 218.4V222.5M134.5 218.7V221.8M138.5 218.1V223.4M146.5 219.1V223.0M153.5 215.4V222.4M160.5 218.4V222.1M165.5 219.8V222.3M172.5 218.1V222.5M180.5 217.6V223.0M187.5 217.9V222.4M195.5 216.1V222.2M198.5 219.0V222.8M206.5 219.1V223.5M214.5 219.7V223.1M224.5 217.7V223.0M232.5 218.4V222.1M242.5 219.3V223.6M247.5 219.9V222.4M255.5 217.7V223.4M261.5 219.6V223.0M269.5 219.0V223.4M274.5 219.2V222.9M278.5 218.3V223.2M281.5 218.5V223.3M290.5 218.9V222.5M299.5 219.1V222.2M309.5 219.4V221.8M316.5 218.4V222.0M323.5 218.3V223.0M326.5 218.7V223.3M331.5 217.8V222.9M336.5 218.2V223.3M340.5 219.4V222.0M344.5 218.4V221.9M352.5 217.9V223.2M361.5 217.5V222.9M365.5 219.6V221.8M371.5 218.8V223.0M374.5 218.9V222.7M378.5 218.4V222.4M385.5 215.0V223.5M393.5 218.1V222.3M399.5 219.0V223.1M405.5 219.2V222.6M413.5 218.5V222.3M422.5 218.6V221.8M427.5 218.2V221.8M431.5 218.7V223.6M436.5 217.6V221.9M445.5 219.9V223.2M448.5 219.3V222.6M455.5 219.8V222.1M461.5 218.7V221.9M471.5 215.7V222.7M476.5 218.0V222.5M486.5 215.8V222.9M489.5 218.0V222.5M498.5 217.6V222.4M506.5 217.7V222.0M512.5 217.5V223.6M518.5 219.2V222.6M525.5 219.6V222.0M529.5 218.9V223.4M533.5 219.9V223.3M541.5 219.6V222.1M550.5 219.8V222.1M555.5 218.0V222.4M559.5 218.6V223.6M563.5 219.6V222.9M568.5 218.7V222.8M573.5 218.5V222.2M581.5 219.6V222.6M584.5 218.0V222.5M591.5 217.9V221.8M595.5 216.4V222.4M600.5 218.8V222.9M605.5 218.6V223.1M615.5 217.4V222.3M625.5 219.7V222.6M631.5 218.9V223.5M638.5 217.8V222.0M645.5 218.5V222.1M648.5 219.7V222.3M658.5 219.2V222.2M666.5 219.2V223.3M672.5 218.3V222.2M681.5 218.8V223.4M685.5 219.8V223.1M688.5 219.8V223.3M697.5 219.8V222.8M705.5 218.4V222.9M715.5 219.6V221.8M718.5 219.7V222.6M728.5 218.1V221.8M736.5 219.6V223.1M742.5 219.9V223.1M751.5 218.7V222.0M756.5 217.5V222.1M761.5 219.7V222.5M769.5 219.5V222.0M776.5 218.8V222.8M781.5 219.2V222.6M790.5 218.5V223.0M798.5 217.8V222.3M803.5 219.0V223.4M811.5 218.3V223.5M819.5 219.1V221.9M828.5 218.4V221.8M834.5 218.3V223.1M839.5 216.6V221.9M847.5 216.4V223.4M852.5 219.4V223.5M862.5 218.6V221.9M866.5 219.8V222.8M870.5 218.6V223.5M876.5 219.6V223.2M883.5 219.7V223.6M889.5 219.2V222.7M895.5 219.4V222.7M901.5 218.3V223.4M910.5 216.1V222.0M919.5 218.7V222.5M926.5 218.6V222.2M931.5 218.7V223.1M935.5 219.4V223.0M939.5 217.4V222.0M942.5 218.8V222.9M856.5 213.4V222.5M878.5 211.9V222.5M724.5 216.4V222.5M777.5 216.4V222.5" stroke="#fcdcb4" stroke-width="0.9"/>
<path d="M17.0 115.9 L18.2 117.0 L19.4 116.9 L20.6 116.6 L21.8 116.0 L23.0 117.2 L24.2 117.3 L25.4 116.6 L26.6 116.6 L27.8 116.0 L29.0 115.5 L30.2 116.3 L31.4 116.8 L32.6 115.6 L33.8 117.2 L35.0 116.0 L36.2 116.0 L37.4 115.6 L38.6 117.7 L39.8 117.1 L41.0 117.4 L42.2 116.8 L43.4 115.6 L44.6 116.2 L45.8 116.6 L47.0 115.7 L48.2 117.6 L49.4 116.3 L50.6 115.8 L51.8 117.3 L53.0 115.8 L54.2 117.5 L55.4 116.5 L56.6 116.7 L57.8 116.2 L59.0 116.6 L60.2 115.9 L61.4 115.6 L62.6 117.4 L63.8 116.0 L65.0 117.2 L66.2 115.9 L67.4 117.6 L68.6 117.5 L69.8 117.1 L71.0 117.2 L72.2 116.8 L73.4 117.1 L74.6 115.8 L75.8 116.5 L77.0 117.3 L78.2 115.9 L79.4 117.5 L80.6 117.4 L81.8 116.4 L83.0 116.3 L84.2 116.5 L85.4 116.3 L86.6 117.7 L87.8 116.3 L89.0 115.5 L90.2 115.7 L91.4 117.1 L92.6 117.7 L93.8 116.6 L95.0 116.6 L96.2 116.7 L97.4 117.1 L98.6 116.0 L99.8 116.8 L101.0 116.7 L102.2 116.8 L103.4 115.9 L104.6 115.8 L105.8 116.2 L107.0 117.5 L108.2 116.2 L109.4 116.8 L110.6 116.1 L111.8 115.7 L113.0 115.6 L114.2 117.3 L115.4 117.2 L116.6 116.3 L117.8 117.0 L119.0 117.0 L120.2 117.4 L121.4 117.6 L122.6 116.4 L123.8 117.6 L125.0 117.6 L126.2 116.8 L127.4 117.4 L128.6 116.5 L129.8 116.3 L131.0 116.0 L132.2 117.4 L133.4 115.8 L134.6 115.6 L135.8 117.2 L137.0 117.2 L138.2 116.5 L139.4 117.3 L140.6 115.6 L141.8 116.0 L143.0 116.1 L144.2 116.4 L145.4 115.8 L146.6 115.6 L147.8 116.2 L149.0 117.4 L150.2 117.6 L151.4 117.1 L152.6 116.5 L153.8 116.0 L155.0 117.6 L156.2 116.6 L157.4 117.1 L158.6 115.5 L159.8 115.9 L161.0 117.3 L162.2 117.2 L163.4 117.4 L164.6 116.8 L165.8 116.4 L167.0 116.7 L168.2 117.3 L169.4 116.1 L170.6 116.6 L171.8 116.1 L173.0 117.1 L174.2 115.5 L175.4 117.0 L176.6 117.6 L177.8 115.5 L179.0 116.8 L180.2 116.9 L181.4 117.3 L182.6 116.7 L183.8 116.0 L185.0 116.3 L186.2 117.6 L187.4 117.4 L188.6 115.7 L189.8 115.7 L191.0 115.7 L192.2 115.5 L193.4 116.4 L194.6 115.8 L195.8 117.4 L197.0 116.9 L198.2 115.7 L199.4 116.6 L200.6 116.2 L201.8 116.5 L203.0 115.9 L204.2 115.8 L205.4 115.8 L206.6 116.3 L207.8 117.0 L209.0 116.7 L210.2 115.5 L211.4 117.0 L212.6 117.4 L213.8 117.1 L215.0 117.2 L216.2 115.5 L217.4 116.5 L218.6 115.6 L219.8 117.1 L221.0 115.8 L222.2 117.0 L223.4 116.0 L224.6 117.0 L225.8 116.1 L227.0 115.5 L228.2 116.3 L229.4 116.1 L230.6 117.4 L231.8 116.1 L233.0 116.5 L234.2 116.6 L235.4 117.5 L236.6 115.7 L237.8 116.8 L239.0 116.6 L240.2 117.0 L241.4 117.6 L242.6 116.1 L243.8 117.0 L245.0 116.6 L246.2 116.7 L247.4 115.6 L248.6 117.2 L249.8 117.6 L251.0 116.2 L252.2 116.1 L253.4 117.6 L254.6 115.7 L255.8 115.6 L257.0 115.6 L258.2 117.2 L259.4 117.1 L260.6 116.4 L261.8 116.8 L263.0 115.5 L264.2 116.8 L265.4 116.4 L266.6 116.6 L267.8 116.3 L269.0 116.3 L270.2 115.9 L271.4 115.5 L272.6 116.4 L273.8 116.0 L275.0 117.0 L276.2 117.2 L277.4 117.0 L278.6 116.4 L279.8 115.9 L281.0 116.3 L282.2 116.5 L283.4 116.8 L284.6 117.5 L285.8 115.6 L287.0 116.5 L288.2 116.5 L289.4 117.0 L290.6 117.4 L291.8 117.1 L293.0 116.8 L294.2 117.1 L295.4 116.9 L296.6 117.3 L297.8 117.0 L299.0 116.9 L300.2 116.0 L301.4 117.4 L302.6 116.3 L303.8 116.8 L305.0 117.2 L306.2 117.5 L307.4 117.6 L308.6 115.4 L309.8 116.1 L311.0 116.1 L312.2 116.3 L313.4 115.7 L314.6 116.6 L315.8 115.6 L317.0 116.1 L318.2 117.5 L319.4 117.0 L320.6 116.4 L321.8 115.6 L323.0 117.5 L324.2 117.0 L325.4 115.9 L326.6 116.1 L327.8 116.8 L329.0 116.9 L330.2 116.0 L331.4 117.5 L332.6 116.1 L333.8 116.0 L335.0 117.3 L336.2 115.7 L337.4 116.9 L338.6 115.8 L339.8 116.7 L341.0 116.0 L342.2 116.2 L343.4 117.5 L344.6 116.4 L345.8 116.4 L347.0 116.8 L348.2 116.0 L349.4 115.8 L350.6 116.2 L351.8 116.0 L353.0 115.8 L354.2 117.5 L355.4 115.5 L356.6 117.2 L357.8 117.5 L359.0 116.9 L360.2 115.4 L361.4 116.5 L362.6 115.5 L363.8 116.7 L365.0 116.9 L366.2 115.9 L367.4 115.4 L368.6 116.6 L369.8 115.6 L371.0 116.1 L372.2 116.4 L373.4 117.4 L374.6 116.2 L375.8 115.7 L377.0 117.1 L378.2 117.2 L379.4 116.6 L380.6 115.5 L381.8 115.8 L383.0 116.3 L384.2 116.6 L385.4 115.9 L386.6 117.2 L387.8 117.2 L389.0 117.4 L390.2 117.3 L391.4 115.4 L392.6 116.7 L393.8 115.6 L395.0 117.4 L396.2 117.0 L397.4 117.1 L398.6 115.8 L399.8 115.5 L401.0 117.2 L402.2 116.7 L403.4 116.8 L404.6 116.4 L405.8 117.1 L407.0 116.1 L408.2 116.0 L409.4 116.2 L410.6 116.0 L411.8 116.8 L413.0 117.3 L414.2 115.5 L415.4 115.5 L416.6 116.5 L417.8 116.9 L419.0 115.8 L420.2 116.0 L421.4 115.5 L422.6 115.5 L423.8 116.5 L425.0 116.9 L426.2 116.8 L427.4 115.7 L428.6 115.6 L429.8 117.4 L431.0 116.6 L432.2 116.3 L433.4 116.9 L434.6 117.0 L435.8 116.5 L437.0 115.5 L438.2 117.2 L439.4 115.8 L440.6 115.5 L441.8 116.1 L443.0 116.5 L444.2 116.8 L445.4 115.8 L446.6 116.9 L447.8 116.5 L449.0 115.7 L450.2 117.2 L451.4 117.1 L452.6 117.4 L453.8 116.9 L455.0 115.8 L456.2 117.1 L457.4 117.4 L458.6 116.5 L459.8 117.4 L461.0 117.5 L462.2 116.2 L463.4 117.4 L464.6 117.4 L465.8 117.1 L467.0 115.4 L468.2 116.1 L469.4 116.7 L470.6 116.7 L471.8 117.0 L473.0 116.8 L474.2 115.7 L475.4 117.4 L476.6 116.5 L477.8 117.3 L479.0 115.8 L480.2 117.6 L481.4 116.6 L482.6 117.1 L483.8 117.0 L485.0 117.3 L486.2 116.2 L487.4 115.5 L488.6 116.3 L489.8 115.8 L491.0 116.5 L492.2 117.2 L493.4 116.2 L494.6 115.6 L495.8 115.4 L497.0 116.3 L498.2 116.6 L499.4 115.4 L500.6 116.8 L501.8 115.8 L503.0 115.6 L504.2 117.4 L505.4 116.5 L506.6 117.3 L507.8 116.5 L509.0 115.6 L510.2 115.9 L511.4 116.3 L512.6 116.8 L513.8 117.0 L515.0 117.0 L516.2 116.8 L517.4 115.9 L518.6 116.3 L519.8 116.2 L521.0 116.4 L522.2 115.9 L523.4 116.5 L524.6 116.4 L525.8 115.4 L527.0 117.2 L528.2 116.6 L529.4 117.1 L530.6 117.0 L531.8 117.0 L533.0 117.5 L534.2 116.2 L535.4 116.2 L536.6 115.4 L537.8 116.8 L539.0 116.6 L540.2 116.6 L541.4 117.5 L542.6 115.8 L543.8 115.8 L545.0 117.0 L546.2 117.1 L547.4 116.4 L548.6 115.5 L549.8 116.2 L551.0 117.2 L552.2 116.4 L553.4 116.4 L554.6 116.2 L555.8 116.7 L557.0 116.7 L558.2 116.9 L559.4 117.2 L560.6 117.0 L561.8 116.2 L563.0 115.9 L564.2 117.1 L565.4 117.1 L566.6 117.4 L567.8 115.8 L569.0 117.2 L570.2 117.3 L571.4 115.5 L572.6 116.0 L573.8 116.7 L575.0 115.7 L576.2 117.2 L577.4 115.9 L578.6 116.8 L579.8 116.0 L581.0 115.8 L582.2 115.8 L583.4 116.4 L584.6 116.9 L585.8 115.8 L587.0 116.8 L588.2 116.1 L589.4 116.8 L590.6 116.1 L591.8 115.8 L593.0 115.6 L594.2 115.5 L595.4 116.9 L596.6 116.2 L597.8 115.6 L599.0 117.3 L600.2 116.8 L601.4 115.4 L602.6 116.9 L603.8 116.6 L605.0 116.3 L606.2 116.4 L607.4 117.4 L608.6 116.1 L609.8 116.7 L611.0 116.7 L612.2 116.1 L613.4 116.1 L614.6 117.0 L615.8 116.7 L617.0 116.3 L618.2 116.5 L619.4 115.8 L620.6 117.1 L621.8 115.4 L623.0 116.7 L624.2 116.3 L625.4 115.8 L626.6 116.6 L627.8 116.6 L629.0 115.5 L630.2 116.4 L631.4 115.7 L632.6 117.1 L633.8 116.0 L635.0 116.0 L636.2 115.8 L637.4 115.4 L638.6 115.7 L639.8 115.6 L641.0 116.7 L642.2 117.2 L643.4 115.8 L644.6 115.6 L645.8 116.5 L647.0 115.6 L648.2 116.2 L649.4 117.0 L650.6 115.8 L651.8 116.9 L653.0 116.5 L654.2 115.5 L655.4 115.8 L656.6 116.6 L657.8 115.5 L659.0 115.8 L660.2 116.6 L661.4 117.1 L662.6 116.5 L663.8 116.8 L665.0 115.3 L666.2 116.0 L667.4 116.0 L668.6 117.3 L669.8 116.1 L671.0 117.0 L672.2 115.4 L673.4 116.4 L674.6 117.3 L675.8 117.0 L677.0 116.6 L678.2 115.7 L679.4 117.3 L680.6 115.5 L681.8 117.4 L683.0 117.0 L684.2 116.9 L685.4 116.5 L686.6 115.7 L687.8 116.1 L689.0 116.8 L690.2 116.7 L691.4 116.2 L692.6 117.1 L693.8 115.6 L695.0 116.2 L696.2 115.9 L697.4 116.5 L698.6 117.7 L699.8 117.7 L701.0 116.5 L702.2 116.9 L703.4 116.6 L704.6 117.9 L705.8 117.6 L707.0 117.2 L708.2 117.6 L709.4 118.9 L710.6 118.1 L711.8 118.9 L713.0 118.9 L714.2 118.8 L715.4 119.2 L716.6 119.0 L717.8 118.8 L719.0 119.7 L720.2 119.4 L721.4 119.7 L722.6 119.6 L723.8 121.4 L725.0 120.5 L726.2 120.1 L727.4 119.9 L728.6 120.6 L729.8 122.7 L731.0 121.4 L732.2 122.6 L733.4 121.6 L734.6 123.0 L735.8 122.7 L737.0 123.8 L738.2 123.5 L739.4 123.3 L740.6 123.3 L741.8 124.4 L743.0 125.3 L744.2 125.2 L745.4 124.8 L746.6 124.5 L747.8 126.0 L749.0 125.9 L750.2 123.9 L751.4 125.4 L752.6 125.6 L753.8 125.3 L755.0 126.1 L756.2 125.8 L757.4 124.0 L758.6 126.0 L759.8 124.1 L761.0 124.2 L762.2 125.9 L763.4 123.6 L764.6 124.2 L765.8 124.8 L767.0 123.8 L768.2 123.8 L769.4 125.3 L770.6 124.7 L771.8 125.1 L773.0 125.2 L774.2 125.4 L775.4 125.5 L776.6 125.3 L777.8 125.7 L779.0 124.3 L780.2 124.9 L781.4 124.4 L782.6 125.6 L783.8 124.7 L785.0 124.1 L786.2 124.8 L787.4 123.8 L788.6 123.4 L789.8 124.2 L791.0 123.5 L792.2 123.2 L793.4 123.5 L794.6 124.5 L795.8 125.5 L797.0 123.5 L798.2 125.2 L799.4 123.8 L800.6 124.9 L801.8 124.4 L803.0 124.8 L804.2 125.6 L805.4 124.9 L806.6 124.9 L807.8 125.9 L809.0 124.3 L810.2 125.0 L811.4 126.1 L812.6 126.6 L813.8 127.1 L815.0 125.1 L816.2 126.3 L817.4 125.5 L818.6 126.7 L819.8 127.2 L821.0 125.3 L822.2 125.9 L823.4 127.7 L824.6 125.9 L825.8 126.4 L827.0 126.5 L828.2 124.7 L829.4 125.7 L830.6 123.2 L831.8 123.8 L833.0 123.0 L834.2 123.1 L835.4 122.4 L836.6 121.5 L837.8 123.3 L839.0 121.1 L840.2 121.9 L841.4 121.5 L842.6 121.9 L843.8 121.5 L845.0 120.5 L846.2 119.2 L847.4 120.8 L848.6 118.8 L849.8 121.1 L851.0 119.3 L852.2 119.1 L853.4 118.9 L854.6 119.3 L855.8 120.3 L857.0 120.4 L858.2 120.1 L859.4 119.9 L860.6 118.5 L861.8 118.7 L863.0 118.5 L864.2 118.8 L865.4 120.0 L866.6 120.2 L867.8 117.6 L869.0 120.0 L870.2 119.8 L871.4 118.5 L872.6 119.0 L873.8 119.2 L875.0 117.5 L876.2 118.6 L877.4 119.5 L878.6 119.1 L879.8 119.1 L881.0 116.7 L882.2 118.4 L883.4 117.7 L884.6 119.0 L885.8 117.3 L887.0 118.8 L888.2 117.9 L889.4 120.2 L890.6 120.4 L891.8 118.8 L893.0 120.0 L894.2 119.8 L895.4 121.4 L896.6 121.6 L897.8 120.2 L899.0 122.8 L900.2 123.1 L901.4 121.8 L902.6 122.3 L903.8 121.9 L905.0 122.8 L906.2 122.4 L907.4 122.7 L908.6 123.8 L909.8 122.4 L911.0 122.9 L912.2 124.4 L913.4 123.0 L914.6 122.7 L915.8 125.1 L917.0 123.0 L918.2 123.8 L919.4 123.5 L920.6 123.4 L921.8 123.7 L923.0 124.3 L924.2 123.1 L925.4 124.3 L926.6 123.0 L927.8 123.1 L929.0 123.5 L930.2 123.7 L931.4 124.0 L932.6 123.9 L933.8 125.4 L935.0 124.9 L936.2 124.2 L937.4 125.0 L938.6 124.6 L939.8 123.5 L941.0 124.2 L942.2 124.4 L943.4 123.7" fill="none" stroke="#aef4ae" stroke-width="1.2" stroke-linejoin="round"/><path d="M32.5 109.9V117.8M42.5 114.3V119.5M47.5 112.9V119.0M55.5 113.0V117.7M68.5 111.3V117.4M75.5 114.8V118.9M86.5 111.6V119.5M98.5 114.7V121.2M109.5 112.9V118.8M117.5 115.0V121.0M123.5 109.6V119.4M133.5 114.3V118.9M146.5 114.8V120.9M154.5 113.8V118.8M167.5 115.2V120.7M179.5 114.0V119.9M189.5 111.0V117.3M203.5 114.3V119.3M213.5 114.7V123.1M221.5 115.2V120.0M231.5 112.0V118.0M245.5 114.2V120.1M254.5 115.3V120.7M259.5 114.2V121.8M271.5 113.6V118.8M279.5 109.6V118.3M286.5 114.5V120.6M291.5 114.2V123.1M302.5 113.8V118.6M313.5 113.9V122.6M319.5 112.8V119.0M328.5 109.9V119.0M335.5 113.6V123.5M341.5 113.9V122.8M348.5 109.7V117.2M355.5 109.9V119.4M363.5 109.6V117.8M370.5 113.9V119.7M379.5 114.7V118.9M389.5 114.2V118.7M402.5 113.3V119.0M410.5 113.5V118.7M418.5 114.9V120.0M423.5 113.7V118.5M433.5 111.4V119.3M440.5 114.3V120.3M454.5 113.9V119.2M460.5 112.2V117.8M468.5 111.0V117.0M478.5 113.5V121.7M488.5 114.0V122.5M501.5 112.7V118.5M505.5 112.6V118.8M510.5 113.2V117.0M517.5 114.4V118.7M529.5 114.6V119.0M541.5 112.4V118.1M553.5 114.5V122.1M565.5 114.1V120.0M571.5 111.0V118.5M584.5 114.4V121.3M591.5 114.7V118.3M595.5 111.0V117.5M608.5 113.0V119.3M621.5 113.7V119.6M628.5 109.6V117.7M636.5 113.8V119.8M649.5 114.3V123.3M655.5 111.0V118.4M663.5 112.5V117.3M668.5 111.3V118.9M673.5 111.9V118.2M685.5 111.9V118.5M691.5 114.1V118.0M700.5 114.2V119.3M706.5 115.8V119.3M713.5 113.1V119.3M720.5 115.8V120.8M730.5 116.8V127.8M740.5 117.8V131.8M747.5 112.0V142.0M757.5 113.1V135.7M768.5 114.0V137.0M779.5 113.3V136.8M784.5 120.3V129.3M790.5 114.0V137.5M800.5 114.9V135.9M812.5 116.1V135.6M822.5 115.4V138.4M833.5 110.3V139.8M845.5 109.2V131.2M856.5 106.0V130.5M868.5 107.8V130.4M879.5 106.0V134.0M891.5 107.3V135.8M902.5 110.1V137.1M915.5 112.2V139.9M926.5 112.8V137.3M939.5 112.6V137.1" stroke="#b4f8b4" stroke-width="1"/>
<path d="M17.0 328.0 L18.0 327.7 L19.0 327.4 L20.0 328.2 L21.0 329.5 L22.0 329.1 L23.0 329.1 L24.0 328.3 L25.0 329.3 L26.0 329.6 L27.0 328.7 L28.0 330.2 L29.0 327.9 L30.0 326.9 L31.0 328.1 L32.0 327.6 L33.0 327.4 L34.0 327.2 L35.0 327.5 L36.0 327.7 L37.0 327.9 L38.0 327.6 L39.0 327.9 L40.0 328.0 L41.0 327.7 L42.0 327.9 L43.0 327.1 L44.0 327.9 L45.0 326.8 L46.0 327.3 L47.0 327.1 L48.0 327.9 L49.0 327.6 L50.0 327.7 L51.0 327.9 L52.0 327.4 L53.0 327.1 L54.0 327.5 L55.0 327.0 L56.0 327.6 L57.0 326.8 L58.0 327.1 L59.0 328.0 L60.0 327.3 L61.0 327.6 L62.0 327.5 L63.0 328.0 L64.0 327.3 L65.0 327.0 L66.0 328.1 L67.0 327.5 L68.0 327.3 L69.0 326.7 L70.0 327.6 L71.0 327.6 L72.0 327.7 L73.0 327.7 L74.0 326.7 L75.0 327.6 L76.0 327.1 L77.0 327.5 L78.0 327.2 L79.0 327.2 L80.0 327.1 L81.0 327.8 L82.0 327.5 L83.0 327.1 L84.0 327.8 L85.0 327.0 L86.0 327.7 L87.0 327.2 L88.0 327.9 L89.0 327.9 L90.0 327.2 L91.0 327.9 L92.0 327.0 L93.0 327.4 L94.0 327.8 L95.0 327.0 L96.0 327.8 L97.0 327.8 L98.0 326.9 L99.0 327.8 L100.0 327.2 L101.0 327.3 L102.0 328.0 L103.0 326.7 L104.0 327.9 L105.0 327.3 L106.0 328.0 L107.0 327.7 L108.0 327.6 L109.0 327.1 L110.0 327.0 L111.0 327.5 L112.0 327.8 L113.0 328.0 L114.0 328.0 L115.0 328.0 L116.0 326.7 L117.0 326.9 L118.0 327.6 L119.0 327.3 L120.0 327.6 L121.0 327.1 L122.0 327.4 L123.0 327.2 L124.0 327.4 L125.0 326.9 L126.0 328.0 L127.0 327.9 L128.0 327.6 L129.0 326.8 L130.0 327.1 L131.0 327.3 L132.0 327.8 L133.0 326.8 L134.0 326.9 L135.0 328.1 L136.0 326.8 L137.0 327.1 L138.0 327.2 L139.0 327.5 L140.0 327.0 L141.0 326.9 L142.0 327.7 L143.0 326.8 L144.0 327.2 L145.0 327.8 L146.0 327.8 L147.0 327.3 L148.0 327.4 L149.0 327.3 L150.0 327.3 L151.0 327.5 L152.0 326.8 L153.0 327.3 L154.0 328.0 L155.0 328.0 L156.0 327.1 L157.0 326.9 L158.0 327.6 L159.0 327.8 L160.0 327.7 L161.0 326.8 L162.0 326.7 L163.0 327.8 L164.0 326.8 L165.0 327.9 L166.0 326.7 L167.0 326.9 L168.0 327.6 L169.0 328.0 L170.0 327.8 L171.0 327.8 L172.0 327.7 L173.0 327.7 L174.0 326.8 L175.0 327.5 L176.0 327.0 L177.0 327.0 L178.0 327.8 L179.0 327.2 L180.0 327.2 L181.0 326.8 L182.0 328.1 L183.0 327.7 L184.0 327.7 L185.0 327.6 L186.0 327.4 L187.0 328.0 L188.0 326.8 L189.0 328.0 L190.0 327.3 L191.0 327.0 L192.0 327.0 L193.0 327.1 L194.0 327.7 L195.0 327.1 L196.0 327.3 L197.0 327.5 L198.0 327.0 L199.0 327.4 L200.0 326.9 L201.0 327.2 L202.0 326.9 L203.0 327.4 L204.0 327.4 L205.0 327.9 L206.0 327.4 L207.0 327.9 L208.0 327.7 L209.0 327.4 L210.0 327.0 L211.0 327.6 L212.0 327.9 L213.0 327.0 L214.0 327.0 L215.0 327.9 L216.0 327.1 L217.0 327.1 L218.0 327.7 L219.0 326.8 L220.0 327.1 L221.0 327.5 L222.0 326.7 L223.0 327.3 L224.0 327.0 L225.0 328.0 L226.0 327.5 L227.0 327.1 L228.0 326.9 L229.0 328.0 L230.0 328.0 L231.0 327.8 L232.0 327.1 L233.0 327.6 L234.0 327.1 L235.0 328.0 L236.0 327.5 L237.0 327.4 L238.0 327.7 L239.0 327.5 L240.0 327.6 L241.0 327.0 L242.0 327.6 L243.0 328.0 L244.0 327.2 L245.0 327.5 L246.0 327.6 L247.0 327.1 L248.0 326.8 L249.0 327.8 L250.0 327.7 L251.0 327.1 L252.0 327.9 L253.0 327.4 L254.0 327.8 L255.0 327.2 L256.0 327.5 L257.0 327.2 L258.0 326.9 L259.0 326.8 L260.0 327.8 L261.0 327.0 L262.0 327.3 L263.0 327.8 L264.0 327.5 L265.0 327.3 L266.0 327.4 L267.0 327.0 L268.0 327.8 L269.0 327.8 L270.0 328.0 L271.0 327.5 L272.0 327.6 L273.0 327.7 L274.0 327.9 L275.0 327.5 L276.0 326.7 L277.0 327.6 L278.0 327.4 L279.0 327.0 L280.0 326.8 L281.0 327.6 L282.0 327.5 L283.0 327.9 L284.0 327.8 L285.0 326.8 L286.0 327.0 L287.0 327.5 L288.0 327.2 L289.0 327.7 L290.0 327.9 L291.0 328.0 L292.0 327.7 L293.0 327.8 L294.0 327.9 L295.0 327.8 L296.0 326.9 L297.0 326.8 L298.0 326.9 L299.0 327.7 L300.0 327.3 L301.0 327.1 L302.0 327.8 L303.0 327.0 L304.0 327.7 L305.0 327.2 L306.0 327.5 L307.0 326.7 L308.0 327.8 L309.0 327.3 L310.0 327.0 L311.0 327.3 L312.0 326.7 L313.0 326.9 L314.0 326.8 L315.0 327.3 L316.0 327.7 L317.0 327.3 L318.0 326.7 L319.0 327.0 L320.0 327.4 L321.0 327.6 L322.0 326.9 L323.0 327.7 L324.0 327.8 L325.0 328.0 L326.0 327.0 L327.0 327.8 L328.0 327.2 L329.0 327.7 L330.0 327.5 L331.0 326.7 L332.0 326.9 L333.0 326.8 L334.0 328.0 L335.0 328.1 L336.0 327.8 L337.0 328.0 L338.0 327.1 L339.0 328.0 L340.0 327.1 L341.0 326.9 L342.0 327.2 L343.0 328.0 L344.0 327.7 L345.0 327.9 L346.0 328.0 L347.0 327.3 L348.0 327.8 L349.0 327.1 L350.0 327.7 L351.0 327.7 L352.0 327.4 L353.0 327.7 L354.0 327.4 L355.0 327.6 L356.0 327.0 L357.0 327.6 L358.0 327.9 L359.0 328.0 L360.0 327.2 L361.0 326.8 L362.0 328.0 L363.0 327.5 L364.0 326.8 L365.0 327.0 L366.0 326.9 L367.0 327.5 L368.0 327.0 L369.0 327.0 L370.0 327.3 L371.0 327.5 L372.0 327.4 L373.0 326.9 L374.0 327.9 L375.0 326.7 L376.0 327.0 L377.0 326.8 L378.0 327.0 L379.0 327.6 L380.0 327.8 L381.0 327.2 L382.0 327.3 L383.0 327.9 L384.0 327.8 L385.0 327.5 L386.0 327.7 L387.0 327.2 L388.0 326.8 L389.0 327.7 L390.0 327.6 L391.0 327.0 L392.0 328.1 L393.0 327.3 L394.0 327.0 L395.0 328.0 L396.0 327.9 L397.0 327.6 L398.0 327.5 L399.0 328.0 L400.0 328.0 L401.0 327.8 L402.0 328.1 L403.0 327.1 L404.0 327.0 L405.0 327.7 L406.0 327.4 L407.0 326.8 L408.0 327.1 L409.0 327.2 L410.0 327.7 L411.0 326.8 L412.0 327.3 L413.0 326.9 L414.0 327.7 L415.0 328.1 L416.0 327.2 L417.0 327.1 L418.0 327.4 L419.0 327.2 L420.0 327.1 L421.0 327.9 L422.0 327.1 L423.0 327.8 L424.0 326.9 L425.0 327.5 L426.0 326.8 L427.0 327.8 L428.0 328.1 L429.0 328.1 L430.0 327.0 L431.0 327.3 L432.0 326.8 L433.0 326.8 L434.0 327.0 L435.0 327.3 L436.0 326.8 L437.0 327.6 L438.0 328.0 L439.0 327.0 L440.0 327.8 L441.0 327.4 L442.0 327.5 L443.0 326.9 L444.0 327.6 L445.0 328.0 L446.0 327.6 L447.0 327.8 L448.0 327.3 L449.0 326.9 L450.0 327.7 L451.0 327.5 L452.0 327.2 L453.0 327.8 L454.0 328.0 L455.0 327.1 L456.0 327.3 L457.0 327.9 L458.0 327.6 L459.0 327.5 L460.0 327.4 L461.0 327.7 L462.0 326.8 L463.0 327.2 L464.0 328.0 L465.0 327.6 L466.0 328.0 L467.0 327.2 L468.0 327.1 L469.0 328.0 L470.0 327.1 L471.0 327.1 L472.0 327.1 L473.0 326.8 L474.0 327.0 L475.0 327.4 L476.0 327.9 L477.0 327.8 L478.0 327.1 L479.0 326.8 L480.0 327.4 L481.0 327.5 L482.0 327.0 L483.0 326.9 L484.0 326.9 L485.0 327.6 L486.0 326.9 L487.0 327.8 L488.0 327.0 L489.0 327.9 L490.0 328.0 L491.0 327.2 L492.0 327.2 L493.0 327.1 L494.0 326.9 L495.0 327.2 L496.0 326.8 L497.0 328.0 L498.0 328.1 L499.0 327.2 L500.0 327.4 L501.0 327.1 L502.0 327.2 L503.0 327.8 L504.0 327.3 L505.0 327.3 L506.0 327.9 L507.0 327.5 L508.0 327.9 L509.0 328.0 L510.0 326.9 L511.0 327.0 L512.0 328.1 L513.0 327.9 L514.0 326.7 L515.0 327.8 L516.0 327.7 L517.0 327.8 L518.0 327.5 L519.0 326.9 L520.0 327.2 L521.0 327.2 L522.0 327.2 L523.0 328.1 L524.0 327.9 L525.0 327.1 L526.0 327.1 L527.0 327.4 L528.0 327.2 L529.0 327.1 L530.0 327.3 L531.0 327.4 L532.0 328.1 L533.0 327.3 L534.0 326.8 L535.0 327.9 L536.0 326.8 L537.0 327.2 L538.0 327.2 L539.0 327.5 L540.0 327.3 L541.0 327.7 L542.0 327.1 L543.0 327.3 L544.0 327.6 L545.0 327.5 L546.0 327.0 L547.0 327.6 L548.0 326.8 L549.0 327.1 L550.0 327.5 L551.0 327.4 L552.0 327.9 L553.0 328.0 L554.0 327.7 L555.0 327.9 L556.0 327.4 L557.0 327.1 L558.0 327.9 L559.0 326.8 L560.0 327.2 L561.0 327.9 L562.0 327.1 L563.0 327.4 L564.0 327.6 L565.0 327.3 L566.0 328.1 L567.0 326.8 L568.0 327.8 L569.0 326.8 L570.0 327.4 L571.0 328.0 L572.0 327.2 L573.0 327.5 L574.0 327.0 L575.0 326.8 L576.0 326.7 L577.0 327.4 L578.0 326.8 L579.0 327.4 L580.0 327.5 L581.0 328.1 L582.0 327.4 L583.0 327.1 L584.0 326.9 L585.0 327.6 L586.0 327.8 L587.0 327.9 L588.0 327.0 L589.0 327.3 L590.0 327.0 L591.0 327.0 L592.0 328.0 L593.0 328.0 L594.0 327.0 L595.0 326.8 L596.0 327.2 L597.0 327.9 L598.0 327.3 L599.0 326.9 L600.0 327.1 L601.0 327.2 L602.0 327.0 L603.0 327.5 L604.0 327.7 L605.0 327.6 L606.0 326.9 L607.0 327.3 L608.0 327.5 L609.0 327.3 L610.0 327.8 L611.0 327.4 L612.0 327.1 L613.0 327.7 L614.0 327.8 L615.0 327.2 L616.0 327.4 L617.0 327.7 L618.0 327.7 L619.0 326.9 L620.0 327.9 L621.0 327.5 L622.0 327.3 L623.0 327.5 L624.0 327.0 L625.0 327.8 L626.0 327.1 L627.0 327.9 L628.0 328.1 L629.0 327.7 L630.0 326.7 L631.0 327.7 L632.0 327.4 L633.0 327.0 L634.0 327.5 L635.0 326.9 L636.0 327.1 L637.0 326.9 L638.0 327.0 L639.0 327.5 L640.0 326.8 L641.0 327.0 L642.0 326.9 L643.0 327.5 L644.0 327.9 L645.0 327.3 L646.0 327.1 L647.0 328.0 L648.0 328.0 L649.0 327.3 L650.0 328.0 L651.0 327.5 L652.0 327.0 L653.0 328.1 L654.0 327.7 L655.0 326.8 L656.0 327.8 L657.0 327.3 L658.0 327.2 L659.0 326.9 L660.0 327.1 L661.0 327.2 L662.0 327.7 L663.0 327.7 L664.0 327.8 L665.0 327.5 L666.0 327.2 L667.0 326.9 L668.0 327.0 L669.0 327.4 L670.0 327.9 L671.0 327.2 L672.0 327.5 L673.0 328.0 L674.0 326.9 L675.0 327.7 L676.0 327.7 L677.0 327.5 L678.0 327.5 L679.0 326.9 L680.0 327.9 L681.0 326.7 L682.0 327.8 L683.0 327.3 L684.0 327.6 L685.0 327.7 L686.0 327.1 L687.0 326.9 L688.0 327.4 L689.0 328.1 L690.0 327.8 L691.0 327.8 L692.0 327.6 L693.0 327.0 L694.0 327.8 L695.0 327.0 L696.0 326.8 L697.0 327.5 L698.0 327.5 L699.0 326.7 L700.0 327.2 L701.0 327.5 L702.0 327.8 L703.0 327.6 L704.0 327.5 L705.0 326.9 L706.0 328.1 L707.0 326.4 L708.0 327.6 L709.0 327.3 L710.0 328.6 L711.0 327.1 L712.0 326.5 L713.0 328.9 L714.0 330.3 L715.0 326.4 L716.0 326.2 L717.0 328.3 L718.0 326.3 L719.0 326.9 L720.0 326.9 L721.0 326.5 L722.0 326.4 L723.0 326.3 L724.0 326.7 L725.0 328.0 L726.0 328.0 L727.0 327.7 L728.0 327.8 L729.0 328.5 L730.0 326.4 L731.0 328.4 L732.0 327.9 L733.0 327.1 L734.0 327.6 L735.0 326.9 L736.0 326.8 L737.0 326.8 L738.0 327.8 L739.0 328.5 L740.0 326.7 L741.0 326.3 L742.0 327.6 L743.0 326.8 L744.0 327.4 L745.0 330.4 L746.0 329.3 L747.0 327.0 L748.0 326.3 L749.0 328.0 L750.0 327.9 L751.0 326.7 L752.0 326.7 L753.0 327.7 L754.0 326.4 L755.0 327.3 L756.0 327.4 L757.0 326.7 L758.0 327.8 L759.0 328.4 L760.0 328.3 L761.0 327.9 L762.0 326.5 L763.0 328.4 L764.0 327.6 L765.0 326.9 L766.0 328.4 L767.0 326.5 L768.0 328.2 L769.0 327.0 L770.0 328.4 L771.0 326.2 L772.0 327.0 L773.0 329.4 L774.0 328.9 L775.0 327.6 L776.0 328.5 L777.0 328.4 L778.0 326.9 L779.0 327.5 L780.0 327.2 L781.0 326.9 L782.0 328.4 L783.0 328.2 L784.0 326.8 L785.0 326.6 L786.0 328.4 L787.0 327.5 L788.0 327.2 L789.0 328.4 L790.0 326.9 L791.0 326.7 L792.0 326.9 L793.0 326.5 L794.0 327.2 L795.0 327.8 L796.0 326.8 L797.0 327.6 L798.0 328.3 L799.0 326.6 L800.0 326.5 L801.0 329.0 L802.0 330.0 L803.0 331.9 L804.0 330.3 L805.0 328.9 L806.0 326.6 L807.0 327.4 L808.0 327.4 L809.0 327.1 L810.0 327.1 L811.0 327.5 L812.0 327.4 L813.0 327.3 L814.0 326.6 L815.0 326.5 L816.0 326.6 L817.0 326.8 L818.0 327.5 L819.0 328.2 L820.0 328.6 L821.0 327.1 L822.0 328.0 L823.0 328.0 L824.0 328.6 L825.0 328.3 L826.0 328.1 L827.0 329.9 L828.0 333.4 L829.0 334.8 L830.0 332.0 L831.0 329.8 L832.0 330.2 L833.0 327.0 L834.0 325.9 L835.0 325.3 L836.0 323.2 L837.0 325.9 L838.0 325.9 L839.0 327.4 L840.0 327.5 L841.0 326.5 L842.0 329.8 L843.0 330.2 L844.0 331.6 L845.0 330.6 L846.0 329.1 L847.0 327.0 L848.0 328.0 L849.0 326.9 L850.0 328.4 L851.0 327.6 L852.0 328.5 L853.0 326.7 L854.0 327.0 L855.0 327.1 L856.0 327.8 L857.0 327.8 L858.0 327.7 L859.0 327.5 L860.0 328.2 L861.0 328.1 L862.0 328.2 L863.0 327.4 L864.0 327.9 L865.0 326.8 L866.0 327.5 L867.0 326.2 L868.0 326.7 L869.0 327.3 L870.0 326.9 L871.0 328.2 L872.0 326.2 L873.0 327.4 L874.0 328.1 L875.0 326.9 L876.0 327.6 L877.0 328.3 L878.0 327.0 L879.0 327.5 L880.0 327.5 L881.0 326.2 L882.0 325.6 L883.0 326.2 L884.0 323.8 L885.0 325.7 L886.0 327.0 L887.0 328.6 L888.0 326.9 L889.0 328.3 L890.0 329.1 L891.0 330.2 L892.0 330.8 L893.0 331.2 L894.0 329.4 L895.0 328.5 L896.0 326.9 L897.0 326.6 L898.0 326.4 L899.0 327.2 L900.0 328.0 L901.0 328.2 L902.0 326.8 L903.0 327.2 L904.0 328.3 L905.0 328.4 L906.0 327.1 L907.0 328.0 L908.0 327.1 L909.0 327.7 L910.0 328.3 L911.0 327.8 L912.0 326.7 L913.0 327.3 L914.0 328.3 L915.0 328.3 L916.0 326.6 L917.0 328.2 L918.0 328.0 L919.0 326.7 L920.0 326.7 L921.0 327.6 L922.0 327.1 L923.0 328.4 L924.0 327.1 L925.0 327.2 L926.0 327.4 L927.0 328.6 L928.0 328.0 L929.0 326.7 L930.0 328.2 L931.0 326.7 L932.0 327.5 L933.0 327.6 L934.0 327.8 L935.0 328.6 L936.0 327.6 L937.0 327.8 L938.0 328.2 L939.0 328.1 L940.0 327.6 L941.0 327.7 L942.0 327.5 L943.0 328.4 L944.0 327.3 L945.0 327.1 L945.0 375.6 L944.0 376.1 L943.0 376.2 L942.0 374.9 L941.0 374.6 L940.0 375.1 L939.0 375.8 L938.0 374.4 L937.0 375.7 L936.0 376.6 L935.0 374.6 L934.0 376.1 L933.0 375.4 L932.0 375.2 L931.0 376.0 L930.0 375.9 L929.0 376.1 L928.0 375.0 L927.0 376.4 L926.0 375.0 L925.0 375.9 L924.0 375.7 L923.0 375.9 L922.0 375.1 L921.0 376.3 L920.0 376.2 L919.0 375.9 L918.0 375.3 L917.0 376.7 L916.0 376.3 L915.0 376.5 L914.0 375.8 L913.0 376.7 L912.0 375.7 L911.0 375.5 L910.0 374.3 L909.0 374.9 L908.0 375.2 L907.0 376.3 L906.0 375.6 L905.0 376.0 L904.0 376.1 L903.0 376.0 L902.0 375.2 L901.0 374.5 L900.0 376.0 L899.0 376.5 L898.0 376.2 L897.0 376.3 L896.0 374.7 L895.0 375.0 L894.0 375.9 L893.0 376.6 L892.0 376.6 L891.0 376.1 L890.0 374.7 L889.0 376.3 L888.0 374.1 L887.0 373.1 L886.0 372.4 L885.0 372.9 L884.0 375.3 L883.0 375.8 L882.0 374.6 L881.0 374.5 L880.0 375.2 L879.0 375.3 L878.0 374.5 L877.0 375.6 L876.0 375.6 L875.0 375.9 L874.0 375.2 L873.0 374.5 L872.0 375.5 L871.0 376.0 L870.0 376.0 L869.0 375.8 L868.0 376.7 L867.0 374.8 L866.0 375.8 L865.0 374.7 L864.0 374.9 L863.0 375.5 L862.0 374.6 L861.0 375.1 L860.0 374.9 L859.0 375.6 L858.0 375.6 L857.0 375.9 L856.0 375.5 L855.0 376.7 L854.0 375.9 L853.0 374.7 L852.0 375.5 L851.0 375.4 L850.0 376.2 L849.0 374.6 L848.0 376.3 L847.0 376.7 L846.0 379.1 L845.0 376.9 L844.0 376.6 L843.0 375.0 L842.0 376.5 L841.0 376.2 L840.0 376.1 L839.0 375.5 L838.0 373.8 L837.0 373.0 L836.0 372.7 L835.0 372.5 L834.0 375.3 L833.0 376.2 L832.0 375.0 L831.0 377.4 L830.0 379.5 L829.0 379.5 L828.0 378.5 L827.0 376.3 L826.0 376.6 L825.0 375.8 L824.0 376.1 L823.0 376.4 L822.0 375.6 L821.0 374.7 L820.0 374.6 L819.0 376.6 L818.0 376.5 L817.0 374.7 L816.0 376.4 L815.0 376.6 L814.0 376.8 L813.0 376.2 L812.0 375.6 L811.0 375.6 L810.0 374.5 L809.0 375.4 L808.0 376.5 L807.0 375.4 L806.0 376.5 L805.0 374.8 L804.0 376.3 L803.0 376.4 L802.0 375.2 L801.0 375.5 L800.0 375.3 L799.0 375.3 L798.0 375.3 L797.0 374.6 L796.0 374.8 L795.0 375.9 L794.0 375.3 L793.0 376.7 L792.0 376.1 L791.0 376.7 L790.0 376.8 L789.0 375.2 L788.0 374.7 L787.0 374.8 L786.0 376.7 L785.0 376.8 L784.0 375.0 L783.0 374.7 L782.0 376.3 L781.0 376.5 L780.0 375.7 L779.0 375.9 L778.0 375.1 L777.0 375.3 L776.0 375.1 L775.0 375.1 L774.0 376.7 L773.0 375.2 L772.0 375.5 L771.0 376.8 L770.0 375.2 L769.0 375.6 L768.0 375.6 L767.0 375.1 L766.0 375.6 L765.0 376.6 L764.0 376.8 L763.0 374.8 L762.0 376.4 L761.0 376.9 L760.0 376.5 L759.0 375.0 L758.0 376.3 L757.0 375.5 L756.0 375.6 L755.0 375.5 L754.0 376.4 L753.0 376.3 L752.0 376.0 L751.0 375.1 L750.0 375.2 L749.0 375.4 L748.0 376.3 L747.0 375.6 L746.0 375.9 L745.0 375.2 L744.0 375.0 L743.0 375.0 L742.0 376.1 L741.0 375.2 L740.0 375.4 L739.0 375.7 L738.0 376.4 L737.0 375.4 L736.0 375.7 L735.0 376.4 L734.0 374.7 L733.0 375.7 L732.0 375.9 L731.0 375.6 L730.0 376.2 L729.0 374.6 L728.0 375.8 L727.0 374.8 L726.0 375.8 L725.0 375.9 L724.0 374.8 L723.0 376.9 L722.0 376.9 L721.0 376.1 L720.0 375.3 L719.0 375.8 L718.0 376.2 L717.0 376.8 L716.0 376.3 L715.0 375.8 L714.0 375.6 L713.0 375.2 L712.0 375.8 L711.0 377.0 L710.0 375.0 L709.0 374.9 L708.0 376.1 L707.0 376.9 L706.0 375.8 L705.0 374.8 L704.0 375.7 L703.0 376.2 L702.0 376.0 L701.0 375.5 L700.0 375.4 L699.0 375.2 L698.0 375.6 L697.0 375.9 L696.0 375.6 L695.0 375.7 L694.0 375.6 L693.0 375.8 L692.0 375.6 L691.0 375.8 L690.0 375.7 L689.0 375.3 L688.0 375.6 L687.0 375.2 L686.0 376.1 L685.0 375.2 L684.0 375.5 L683.0 376.6 L682.0 375.7 L681.0 375.3 L680.0 375.4 L679.0 376.0 L678.0 375.4 L677.0 376.1 L676.0 375.4 L675.0 375.9 L674.0 376.6 L673.0 375.5 L672.0 376.2 L671.0 375.2 L670.0 376.2 L669.0 376.5 L668.0 376.2 L667.0 376.1 L666.0 375.3 L665.0 376.0 L664.0 375.6 L663.0 375.8 L662.0 375.9 L661.0 376.4 L660.0 375.9 L659.0 376.1 L658.0 376.3 L657.0 376.6 L656.0 375.5 L655.0 376.2 L654.0 376.5 L653.0 376.3 L652.0 375.5 L651.0 375.9 L650.0 375.5 L649.0 375.6 L648.0 375.9 L647.0 375.4 L646.0 375.7 L645.0 375.3 L644.0 375.9 L643.0 376.5 L642.0 375.4 L641.0 375.9 L640.0 375.9 L639.0 375.4 L638.0 375.8 L637.0 375.8 L636.0 376.2 L635.0 376.0 L634.0 375.8 L633.0 376.2 L632.0 376.0 L631.0 375.7 L630.0 376.2 L629.0 375.7 L628.0 376.4 L627.0 376.0 L626.0 376.5 L625.0 376.0 L624.0 375.4 L623.0 376.4 L622.0 375.9 L621.0 376.5 L620.0 375.9 L619.0 376.0 L618.0 376.1 L617.0 375.7 L616.0 375.5 L615.0 376.7 L614.0 376.6 L613.0 375.6 L612.0 376.5 L611.0 376.1 L610.0 376.5 L609.0 375.3 L608.0 376.2 L607.0 376.0 L606.0 376.3 L605.0 376.1 L604.0 375.6 L603.0 375.6 L602.0 375.9 L601.0 375.4 L600.0 376.3 L599.0 375.6 L598.0 375.8 L597.0 375.4 L596.0 376.5 L595.0 376.0 L594.0 375.6 L593.0 375.8 L592.0 375.5 L591.0 376.4 L590.0 376.5 L589.0 375.7 L588.0 375.4 L587.0 376.3 L586.0 376.6 L585.0 375.8 L584.0 376.0 L583.0 376.6 L582.0 375.6 L581.0 376.2 L580.0 375.7 L579.0 376.5 L578.0 375.6 L577.0 376.1 L576.0 376.6 L575.0 376.2 L574.0 375.9 L573.0 376.6 L572.0 375.9 L571.0 376.5 L570.0 375.9 L569.0 375.3 L568.0 376.7 L567.0 375.9 L566.0 376.3 L565.0 375.5 L564.0 376.3 L563.0 375.9 L562.0 375.9 L561.0 375.6 L560.0 375.3 L559.0 375.4 L558.0 376.2 L557.0 375.6 L556.0 376.6 L555.0 375.9 L554.0 375.5 L553.0 376.0 L552.0 376.5 L551.0 376.4 L550.0 376.6 L549.0 375.4 L548.0 375.8 L547.0 375.6 L546.0 375.9 L545.0 375.6 L544.0 376.6 L543.0 375.9 L542.0 376.1 L541.0 375.9 L540.0 376.6 L539.0 376.6 L538.0 375.7 L537.0 376.7 L536.0 376.6 L535.0 376.5 L534.0 376.0 L533.0 376.2 L532.0 376.1 L531.0 376.6 L530.0 376.1 L529.0 376.7 L528.0 376.3 L527.0 376.4 L526.0 375.6 L525.0 376.8 L524.0 376.6 L523.0 376.7 L522.0 376.2 L521.0 375.8 L520.0 376.1 L519.0 376.2 L518.0 376.0 L517.0 375.5 L516.0 376.1 L515.0 376.8 L514.0 376.6 L513.0 375.6 L512.0 376.0 L511.0 375.5 L510.0 375.8 L509.0 376.6 L508.0 375.7 L507.0 376.7 L506.0 375.7 L505.0 376.2 L504.0 376.2 L503.0 376.2 L502.0 376.5 L501.0 375.5 L500.0 376.4 L499.0 376.8 L498.0 375.8 L497.0 376.8 L496.0 375.7 L495.0 376.7 L494.0 375.6 L493.0 375.6 L492.0 376.8 L491.0 375.6 L490.0 376.2 L489.0 375.5 L488.0 376.6 L487.0 375.7 L486.0 375.5 L485.0 376.4 L484.0 376.8 L483.0 376.7 L482.0 376.8 L481.0 375.5 L480.0 375.8 L479.0 375.8 L478.0 376.8 L477.0 375.5 L476.0 376.3 L475.0 376.5 L474.0 375.6 L473.0 375.8 L472.0 376.8 L471.0 375.6 L470.0 376.0 L469.0 376.8 L468.0 375.8 L467.0 376.6 L466.0 375.7 L465.0 375.7 L464.0 376.8 L463.0 376.2 L462.0 376.4 L461.0 376.8 L460.0 375.9 L459.0 376.3 L458.0 375.5 L457.0 376.8 L456.0 376.7 L455.0 376.2 L454.0 375.7 L453.0 376.1 L452.0 376.1 L451.0 376.1 L450.0 376.9 L449.0 375.8 L448.0 376.2 L447.0 376.3 L446.0 376.8 L445.0 376.2 L444.0 376.8 L443.0 375.5 L442.0 375.9 L441.0 376.7 L440.0 376.6 L439.0 375.7 L438.0 376.6 L437.0 376.5 L436.0 376.1 L435.0 375.9 L434.0 376.6 L433.0 376.0 L432.0 376.3 L431.0 376.0 L430.0 375.5 L429.0 375.6 L428.0 376.6 L427.0 376.2 L426.0 375.8 L425.0 375.8 L424.0 376.3 L423.0 375.5 L422.0 375.9 L421.0 376.7 L420.0 376.2 L419.0 376.7 L418.0 376.3 L417.0 376.2 L416.0 375.8 L415.0 376.8 L414.0 376.9 L413.0 376.6 L412.0 375.7 L411.0 376.0 L410.0 376.0 L409.0 376.6 L408.0 376.2 L407.0 376.6 L406.0 376.5 L405.0 376.0 L404.0 375.7 L403.0 376.9 L402.0 376.8 L401.0 376.1 L400.0 376.2 L399.0 376.8 L398.0 376.2 L397.0 376.9 L396.0 377.0 L395.0 376.6 L394.0 375.8 L393.0 375.7 L392.0 376.0 L391.0 376.1 L390.0 376.4 L389.0 376.2 L388.0 376.4 L387.0 376.3 L386.0 375.7 L385.0 376.2 L384.0 375.9 L383.0 376.4 L382.0 375.7 L381.0 376.4 L380.0 376.8 L379.0 376.5 L378.0 376.8 L377.0 376.2 L376.0 376.8 L375.0 377.0 L374.0 375.8 L373.0 375.7 L372.0 375.9 L371.0 376.7 L370.0 376.7 L369.0 376.4 L368.0 377.0 L367.0 375.6 L366.0 376.5 L365.0 375.7 L364.0 376.5 L363.0 375.8 L362.0 375.8 L361.0 376.2 L360.0 376.1 L359.0 376.6 L358.0 376.3 L357.0 376.9 L356.0 376.8 L355.0 375.8 L354.0 376.7 L353.0 375.7 L352.0 375.8 L351.0 376.2 L350.0 376.5 L349.0 375.9 L348.0 376.3 L347.0 376.0 L346.0 376.1 L345.0 376.4 L344.0 376.7 L343.0 375.9 L342.0 376.6 L341.0 376.2 L340.0 376.8 L339.0 375.8 L338.0 376.5 L337.0 375.7 L336.0 376.9 L335.0 376.3 L334.0 375.9 L333.0 376.6 L332.0 375.7 L331.0 375.8 L330.0 375.7 L329.0 377.0 L328.0 375.8 L327.0 376.5 L326.0 376.0 L325.0 376.1 L324.0 376.3 L323.0 376.1 L322.0 375.7 L321.0 376.2 L320.0 375.9 L319.0 375.8 L318.0 377.0 L317.0 376.2 L316.0 375.8 L315.0 376.3 L314.0 375.7 L313.0 376.4 L312.0 375.8 L311.0 375.9 L310.0 375.9 L309.0 376.0 L308.0 375.9 L307.0 376.0 L306.0 376.0 L305.0 376.4 L304.0 376.2 L303.0 377.0 L302.0 376.3 L301.0 376.4 L300.0 376.6 L299.0 376.5 L298.0 376.4 L297.0 376.0 L296.0 375.8 L295.0 376.4 L294.0 376.3 L293.0 377.0 L292.0 376.2 L291.0 376.7 L290.0 376.6 L289.0 375.9 L288.0 376.9 L287.0 377.0 L286.0 375.8 L285.0 376.2 L284.0 376.6 L283.0 375.9 L282.0 377.1 L281.0 376.4 L280.0 376.4 L279.0 376.5 L278.0 376.4 L277.0 376.4 L276.0 376.8 L275.0 376.8 L274.0 376.4 L273.0 376.2 L272.0 377.1 L271.0 376.6 L270.0 376.3 L269.0 377.0 L268.0 375.8 L267.0 376.1 L266.0 376.5 L265.0 376.0 L264.0 376.0 L263.0 376.8 L262.0 376.8 L261.0 376.0 L260.0 376.8 L259.0 375.9 L258.0 376.1 L257.0 376.9 L256.0 376.8 L255.0 376.3 L254.0 376.3 L253.0 376.1 L252.0 375.8 L251.0 376.3 L250.0 376.3 L249.0 376.5 L248.0 376.8 L247.0 376.0 L246.0 376.4 L245.0 376.6 L244.0 376.8 L243.0 376.0 L242.0 376.0 L241.0 377.0 L240.0 376.7 L239.0 376.0 L238.0 376.7 L237.0 376.3 L236.0 376.0 L235.0 376.7 L234.0 376.9 L233.0 376.9 L232.0 376.7 L231.0 376.9 L230.0 376.3 L229.0 375.9 L228.0 377.0 L227.0 376.7 L226.0 376.0 L225.0 376.4 L224.0 376.6 L223.0 376.5 L222.0 376.3 L221.0 376.8 L220.0 376.3 L219.0 377.0 L218.0 375.9 L217.0 376.4 L216.0 377.0 L215.0 377.1 L214.0 376.8 L213.0 376.2 L212.0 376.2 L211.0 377.2 L210.0 376.8 L209.0 376.2 L208.0 377.2 L207.0 376.4 L206.0 376.8 L205.0 376.6 L204.0 377.0 L203.0 376.7 L202.0 377.2 L201.0 376.9 L200.0 376.3 L199.0 376.4 L198.0 375.9 L197.0 376.2 L196.0 377.0 L195.0 376.8 L194.0 377.2 L193.0 376.2 L192.0 376.7 L191.0 376.2 L190.0 376.9 L189.0 376.6 L188.0 376.9 L187.0 376.1 L186.0 376.8 L185.0 376.6 L184.0 376.9 L183.0 376.1 L182.0 376.4 L181.0 376.6 L180.0 376.5 L179.0 376.4 L178.0 376.4 L177.0 376.7 L176.0 376.1 L175.0 377.0 L174.0 376.3 L173.0 377.2 L172.0 376.0 L171.0 376.6 L170.0 375.9 L169.0 376.7 L168.0 377.1 L167.0 377.1 L166.0 377.1 L165.0 376.1 L164.0 376.0 L163.0 376.0 L162.0 376.1 L161.0 376.7 L160.0 376.7 L159.0 376.8 L158.0 377.1 L157.0 377.0 L156.0 376.6 L155.0 377.0 L154.0 376.4 L153.0 377.1 L152.0 376.5 L151.0 376.9 L150.0 376.3 L149.0 376.9 L148.0 376.9 L147.0 376.4 L146.0 376.8 L145.0 376.5 L144.0 376.8 L143.0 376.2 L142.0 376.5 L141.0 376.7 L140.0 376.4 L139.0 376.4 L138.0 376.8 L137.0 376.4 L136.0 376.6 L135.0 377.1 L134.0 376.0 L133.0 376.1 L132.0 375.9 L131.0 376.6 L130.0 376.7 L129.0 376.3 L128.0 377.2 L127.0 376.0 L126.0 377.1 L125.0 377.1 L124.0 377.1 L123.0 376.2 L122.0 377.0 L121.0 377.2 L120.0 376.4 L119.0 377.3 L118.0 376.7 L117.0 376.4 L116.0 377.0 L115.0 376.8 L114.0 377.2 L113.0 376.9 L112.0 376.0 L111.0 376.4 L110.0 376.1 L109.0 376.4 L108.0 376.7 L107.0 377.1 L106.0 376.3 L105.0 377.3 L104.0 377.4 L103.0 377.3 L102.0 376.2 L101.0 376.6 L100.0 376.6 L99.0 376.4 L98.0 376.4 L97.0 376.5 L96.0 376.9 L95.0 376.4 L94.0 377.2 L93.0 376.3 L92.0 376.2 L91.0 376.6 L90.0 376.9 L89.0 376.2 L88.0 376.6 L87.0 376.5 L86.0 376.1 L85.0 376.6 L84.0 376.3 L83.0 376.3 L82.0 377.0 L81.0 376.0 L80.0 376.5 L79.0 376.8 L78.0 376.5 L77.0 376.5 L76.0 376.7 L75.0 377.4 L74.0 376.1 L73.0 377.1 L72.0 376.5 L71.0 376.7 L70.0 376.1 L69.0 376.9 L68.0 376.8 L67.0 376.0 L66.0 376.8 L65.0 376.5 L64.0 377.0 L63.0 376.7 L62.0 376.9 L61.0 376.9 L60.0 376.8 L59.0 376.6 L58.0 377.4 L57.0 377.3 L56.0 376.3 L55.0 376.6 L54.0 376.1 L53.0 376.2 L52.0 377.4 L51.0 377.4 L50.0 376.5 L49.0 376.1 L48.0 376.1 L47.0 377.1 L46.0 376.3 L45.0 377.2 L44.0 377.4 L43.0 376.2 L42.0 376.9 L41.0 376.4 L40.0 376.9 L39.0 377.4 L38.0 376.3 L37.0 377.5 L36.0 377.4 L35.0 377.3 L34.0 376.9 L33.0 376.6 L32.0 376.5 L31.0 376.7 L30.0 376.4 L29.0 376.2 L28.0 376.7 L27.0 377.4 L26.0 377.1 L25.0 376.1 L24.0 377.2 L23.0 377.1 L22.0 377.0 L21.0 376.8 L20.0 377.5 L19.0 377.3 L18.0 377.0 L17.0 376.9Z" fill="#80fc80"/><path d="M842.3 329V375M847.2 330V378" stroke="#1c3a1c" stroke-width="1"/>
<path d="M6.3 143.0h2.1v7.8h-2.1v-5.4l-2.3 1.1v-1.7z" fill="#b4f0b4"/><path d="M10.2 147.2L12.7 144.7L15.2 147.2L12.7 149.7Z" fill="#b4f0b4"/><text x="3.4" y="191.2" fill="#f09aa2" font-family="Liberation Sans" font-weight="700" font-size="10.8">3</text><path d="M10.2 187.6L12.7 185.1L15.2 187.6L12.7 190.1Z" fill="#f09aa2"/><text x="3.4" y="261.4" fill="#f8dab4" font-family="Liberation Sans" font-weight="700" font-size="10.8">2</text><path d="M10.2 257.8L12.7 255.3L15.2 257.8L12.7 260.3Z" fill="#f8dab4"/><text x="3.4" y="379.8" fill="#b0f0b0" font-family="Liberation Sans" font-weight="700" font-size="10.8">4</text><path d="M10.2 376.2L12.7 373.7L15.2 376.2L12.7 378.7Z" fill="#b0f0b0"/>
</svg></div>
<div id="vscroll" class="a"></div>
<svg class="a" style="left:1065.4px;top:51px" width="4" height="3"><path d="M0 2.6L2 0L4 2.6Z" fill="#505050"/></svg>
<div class="a" style="left:1062px;top:299px;width:10px;height:11px;background:linear-gradient(90deg,#f6f6f6,#dcdcdc);border:1px solid #b4b4b4;border-radius:2px"></div>
<svg class="a" style="left:1065px;top:544.5px" width="5" height="3"><path d="M0 0L2.5 3L5 0Z" fill="#505050"/></svg>
<div id="hscroll" class="a"></div>
<svg class="a" style="left:121px;top:555.5px" width="3" height="5"><path d="M3 0L0 2.5L3 5Z" fill="#505050"/></svg>
<div class="a" style="left:815px;top:553px;width:22px;height:10px;background:linear-gradient(#f4f4f4,#d8d8d8);border:1px solid #a8a8a8;border-radius:2px"></div>
<div class="a" style="left:823px;top:556px;width:6px;height:4px;border-left:1px solid #777;border-right:1px solid #777"><div class="a" style="left:2px;top:0;width:1px;height:4px;background:#777"></div></div>
<svg class="a" style="left:1053px;top:555px" width="3" height="5"><path d="M0 0L3 2.5L0 5Z" fill="#505050"/></svg>
<div id="corner" class="a"></div>
<div id="rborder" class="a"></div>
<div id="status" class="a"></div>
<div class="t fit" id="ttl" style="left:14.24px;top:2.86px;font-size:8.8px;transform:scaleX(0.9081);transform-origin:0 0;color:#2a2a2a">USB Oscilloscope - C:\temp\autosc1\autosc_3\TP\2000maf.mwf</div>
<div class="t fit" id="m1" style="left:3.6px;top:17.13px;font-size:8.6px;transform:scaleX(1.0185);transform-origin:0 0;color:#1a1a1a">File</div>
<div class="t fit" id="m2" style="left:26.13px;top:17.13px;font-size:8.6px;transform:scaleX(0.9906);transform-origin:0 0;color:#1a1a1a">Control</div>
<div class="t fit" id="m3" style="left:63.48px;top:17.13px;font-size:8.6px;transform:scaleX(0.9099);transform-origin:0 0;color:#1a1a1a">Operations</div>
<div class="t fit" id="m4" style="left:110.06px;top:17.13px;font-size:8.6px;transform:scaleX(0.9691);transform-origin:0 0;color:#1a1a1a">Bookmark</div>
<div class="t fit" id="m5" style="left:156.7px;top:17.13px;font-size:8.6px;transform:scaleX(0.9072);transform-origin:0 0;color:#1a1a1a">Analysis</div>
<div class="t fit" id="m6" style="left:194.29px;top:17.13px;font-size:8.6px;transform:scaleX(0.9231);transform-origin:0 0;color:#1a1a1a">View</div>
<div class="t fit" id="m7" style="left:219.77px;top:17.13px;font-size:8.6px;transform:scaleX(0.9681);transform-origin:0 0;color:#1a1a1a">Utilities</div>
<div class="t fit" id="m8" style="left:255.86px;top:17.13px;font-size:8.6px;transform:scaleX(1.0094);transform-origin:0 0;color:#1a1a1a">Help</div>
<div class="t fit" id="startdev" style="left:18.7px;top:50.65px;font-size:10px;transform:scaleX(0.9119);transform-origin:0 0;color:#303030">Start device</div>
<div class="t fit" id="modes" style="left:19.11px;top:66.75px;font-size:10px;transform:scaleX(0.8939);transform-origin:0 0;color:#2a2a30">Modes</div>
<div class="t fit" id="zoomv" style="left:13.56px;top:83.75px;font-size:10px;transform:scaleX(0.8625);transform-origin:0 0;color:#222">:1:400</div>
<div class="t fit" id="timev" style="left:61.09px;top:83.75px;font-size:10px;transform:scaleX(0.9079);transform-origin:0 0;color:#222">:20 ms</div>
<div class="t fit" id="ch1v" style="left:44.55px;top:101.55px;font-size:10px;transform:scaleX(0.9409);transform-origin:0 0;color:#333">... 1 V</div>
<div class="t fit" id="ch2v" style="left:44.55px;top:117.25px;font-size:10px;transform:scaleX(0.9409);transform-origin:0 0;color:#333">... 2 V</div>
<div class="t fit" id="ch3v" style="left:44.55px;top:132.95px;font-size:10px;transform:scaleX(0.9409);transform-origin:0 0;color:#333">... 2 V</div>
<div class="t fit" id="ch4v" style="left:44.55px;top:148.65px;font-size:10px;transform:scaleX(0.9409);transform-origin:0 0;color:#333">... 5 V</div>
<div class="t fit" id="trigv" style="left:52.14px;top:165.15px;font-size:10px;transform:scaleX(0.9366);transform-origin:0 0;color:#333">:0 V</div>
<div class="t fit" id="t0" style="left:16.7px;top:180.75px;font-size:10px;transform:scaleX(0.8666);transform-origin:0 0;color:#333">000:00:34.380.800</div>
<div class="t fit" id="ta" style="left:13.04px;top:198.25px;font-size:10px;transform:scaleX(0.8645);transform-origin:0 0;color:#333">:000:00:34.400.800</div>
<div class="t fit" id="tb" style="left:13.04px;top:213.45px;font-size:10px;transform:scaleX(0.8645);transform-origin:0 0;color:#333">:000:00:34.557.600</div>
<div class="t fit" id="status1" style="left:0.56px;top:569.29px;font-size:9px;transform:scaleX(0.8625);transform-origin:0 0;color:#222">Show device status and readout panel, like, toggle visibility of panel</div>
<div class="t fit" id="status2" style="left:854.52px;top:569.29px;font-size:9px;transform:scaleX(0.8697);transform-origin:0 0;color:#222">Total file time: 000:00:46.106.766</div>
</body></html>
